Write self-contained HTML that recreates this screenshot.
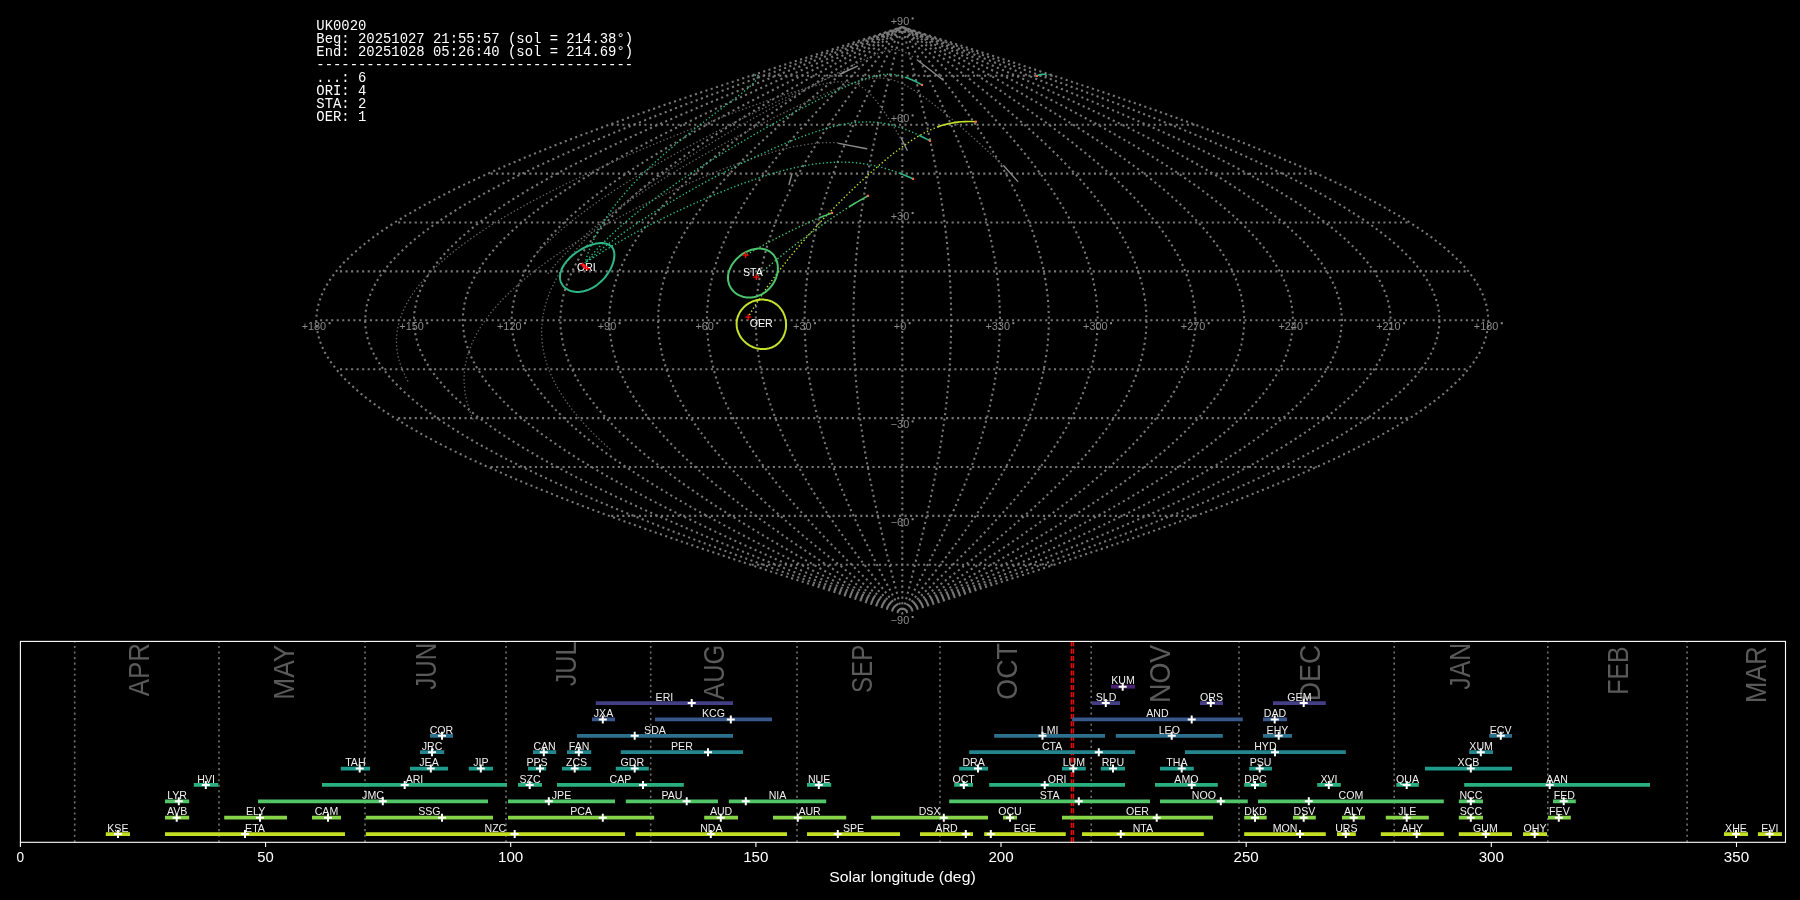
<!DOCTYPE html>
<html><head><meta charset="utf-8"><style>
html,body{margin:0;padding:0;background:#000;width:1800px;height:900px;overflow:hidden}
svg{display:block;will-change:transform}
.gl{font-family:"Liberation Sans",sans-serif;font-size:10.9px;fill:#8a8a8a}
.deg{font-size:6px}
.leg{font-family:"Liberation Mono",monospace;font-size:13.9px;fill:#ffffff;white-space:pre}
.mon{font-family:"Liberation Sans",sans-serif;font-size:29.5px;fill:#5a5a5a}
.bl{font-family:"Liberation Sans",sans-serif;font-size:10.6px;fill:#f0f0f0;text-anchor:middle}
.ml{font-family:"Liberation Sans",sans-serif;font-size:10.6px;fill:#ffffff;text-anchor:middle}
.tl{font-family:"Liberation Sans",sans-serif;font-size:13.9px;fill:#ffffff;text-anchor:middle}
</style></head><body>
<svg width="1800" height="900" viewBox="0 0 1800 900">
<rect width="1800" height="900" fill="#000"/>
<path d="M751.6 564.8H1054.0M611.2 515.9H1195.3M490.6 467.0H1316.7M398.1 418.1H1409.9M340.0 369.2H1468.4M320.1 320.3H1488.4M340.0 271.4H1468.4M398.1 222.5H1409.9M490.6 173.6H1316.7M611.2 124.7H1195.3M751.6 75.8H1054.0" fill="none" stroke="#777777" stroke-width="2.09" stroke-dasharray="2.09 3.445"/>
<path d="M902.3 613.7L927.9 605.5L953.4 597.4L978.8 589.2L1004.1 581.1L1029.2 573.0L1054.0 564.8L1078.5 556.6L1102.8 548.5L1126.6 540.4L1150.0 532.2L1172.9 524.0L1195.3 515.9L1217.2 507.8L1238.5 499.6L1259.1 491.4L1279.0 483.3L1298.2 475.1L1316.7 467.0L1334.4 458.9L1351.3 450.7L1367.3 442.6L1382.4 434.4L1396.6 426.2L1409.9 418.1L1422.2 409.9L1433.5 401.8L1443.8 393.6L1453.0 385.5L1461.3 377.4L1468.4 369.2L1474.5 361.1L1479.5 352.9L1483.4 344.8L1486.1 336.6L1487.8 328.4L1488.4 320.3L1487.8 312.2L1486.1 304.0L1483.4 295.9L1479.5 287.7L1474.5 279.6L1468.4 271.4L1461.3 263.2L1453.0 255.1L1443.8 247.0L1433.5 238.8L1422.2 230.7L1409.9 222.5L1396.6 214.4L1382.4 206.2L1367.3 198.1L1351.3 189.9L1334.4 181.8L1316.7 173.6L1298.2 165.5L1279.0 157.3L1259.1 149.2L1238.5 141.0L1217.2 132.9L1195.3 124.7L1172.9 116.6L1150.0 108.4L1126.6 100.3L1102.8 92.1L1078.5 84.0L1054.0 75.8L1029.2 67.7L1004.1 59.5L978.8 51.4L953.4 43.2L927.9 35.1L902.3 26.9M902.3 613.7L925.7 605.5L949.1 597.4L972.4 589.2L995.6 581.1L1018.6 573.0L1041.3 564.8L1063.9 556.6L1086.0 548.5L1107.9 540.4L1129.3 532.2L1150.4 524.0L1170.9 515.9L1191.0 507.8L1210.4 499.6L1229.4 491.4L1247.6 483.3L1265.3 475.1L1282.2 467.0L1298.4 458.9L1313.8 450.7L1328.5 442.6L1342.4 434.4L1355.4 426.2L1367.6 418.1L1378.8 409.9L1389.2 401.8L1398.6 393.6L1407.1 385.5L1414.7 377.4L1421.2 369.2L1426.8 361.1L1431.4 352.9L1434.9 344.8L1437.5 336.6L1439.0 328.4L1439.5 320.3L1439.0 312.2L1437.5 304.0L1434.9 295.9L1431.4 287.7L1426.8 279.6L1421.2 271.4L1414.7 263.2L1407.1 255.1L1398.6 247.0L1389.2 238.8L1378.8 230.7L1367.6 222.5L1355.4 214.4L1342.4 206.2L1328.5 198.1L1313.8 189.9L1298.4 181.8L1282.2 173.6L1265.3 165.5L1247.6 157.3L1229.4 149.2L1210.4 141.0L1191.0 132.9L1170.9 124.7L1150.4 116.6L1129.3 108.4L1107.9 100.3L1086.0 92.1L1063.9 84.0L1041.3 75.8L1018.6 67.7L995.6 59.5L972.4 51.4L949.1 43.2L925.7 35.1L902.3 26.9M902.3 613.7L923.6 605.5L944.9 597.4L966.0 589.2L987.1 581.1L1008.0 573.0L1028.7 564.8L1049.2 556.6L1069.3 548.5L1089.2 540.4L1108.7 532.2L1127.8 524.0L1146.5 515.9L1164.7 507.8L1182.4 499.6L1199.6 491.4L1216.2 483.3L1232.3 475.1L1247.7 467.0L1262.4 458.9L1276.4 450.7L1289.8 442.6L1302.4 434.4L1314.2 426.2L1325.3 418.1L1335.5 409.9L1344.9 401.8L1353.5 393.6L1361.2 385.5L1368.1 377.4L1374.1 369.2L1379.1 361.1L1383.3 352.9L1386.5 344.8L1388.8 336.6L1390.2 328.4L1390.7 320.3L1390.2 312.2L1388.8 304.0L1386.5 295.9L1383.3 287.7L1379.1 279.6L1374.1 271.4L1368.1 263.2L1361.2 255.1L1353.5 247.0L1344.9 238.8L1335.5 230.7L1325.3 222.5L1314.2 214.4L1302.4 206.2L1289.8 198.1L1276.4 189.9L1262.4 181.8L1247.7 173.6L1232.3 165.5L1216.2 157.3L1199.6 149.2L1182.4 141.0L1164.7 132.9L1146.5 124.7L1127.8 116.6L1108.7 108.4L1089.2 100.3L1069.3 92.1L1049.2 84.0L1028.7 75.8L1008.0 67.7L987.1 59.5L966.0 51.4L944.9 43.2L923.6 35.1L902.3 26.9M902.3 613.7L921.5 605.5L940.6 597.4L959.7 589.2L978.6 581.1L997.4 573.0L1016.1 564.8L1034.5 556.6L1052.6 548.5L1070.5 540.4L1088.1 532.2L1105.3 524.0L1122.1 515.9L1138.5 507.8L1154.4 499.6L1169.9 491.4L1184.8 483.3L1199.3 475.1L1213.1 467.0L1226.4 458.9L1239.0 450.7L1251.0 442.6L1262.4 434.4L1273.0 426.2L1283.0 418.1L1292.2 409.9L1300.7 401.8L1308.4 393.6L1315.4 385.5L1321.5 377.4L1326.9 369.2L1331.4 361.1L1335.2 352.9L1338.1 344.8L1340.2 336.6L1341.4 328.4L1341.9 320.3L1341.4 312.2L1340.2 304.0L1338.1 295.9L1335.2 287.7L1331.4 279.6L1326.9 271.4L1321.5 263.2L1315.4 255.1L1308.4 247.0L1300.7 238.8L1292.2 230.7L1283.0 222.5L1273.0 214.4L1262.4 206.2L1251.0 198.1L1239.0 189.9L1226.4 181.8L1213.1 173.6L1199.3 165.5L1184.8 157.3L1169.9 149.2L1154.4 141.0L1138.5 132.9L1122.1 124.7L1105.3 116.6L1088.1 108.4L1070.5 100.3L1052.6 92.1L1034.5 84.0L1016.1 75.8L997.4 67.7L978.6 59.5L959.7 51.4L940.6 43.2L921.5 35.1L902.3 26.9M902.3 613.7L919.3 605.5L936.4 597.4L953.3 589.2L970.1 581.1L986.9 573.0L1003.4 564.8L1019.8 556.6L1035.9 548.5L1051.8 540.4L1067.4 532.2L1082.7 524.0L1097.7 515.9L1112.2 507.8L1126.4 499.6L1140.2 491.4L1153.4 483.3L1166.3 475.1L1178.6 467.0L1190.4 458.9L1201.6 450.7L1212.3 442.6L1222.4 434.4L1231.8 426.2L1240.7 418.1L1248.9 409.9L1256.4 401.8L1263.3 393.6L1269.5 385.5L1274.9 377.4L1279.7 369.2L1283.8 361.1L1287.1 352.9L1289.7 344.8L1291.5 336.6L1292.6 328.4L1293.0 320.3L1292.6 312.2L1291.5 304.0L1289.7 295.9L1287.1 287.7L1283.8 279.6L1279.7 271.4L1274.9 263.2L1269.5 255.1L1263.3 247.0L1256.4 238.8L1248.9 230.7L1240.7 222.5L1231.8 214.4L1222.4 206.2L1212.3 198.1L1201.6 189.9L1190.4 181.8L1178.6 173.6L1166.3 165.5L1153.4 157.3L1140.2 149.2L1126.4 141.0L1112.2 132.9L1097.7 124.7L1082.7 116.6L1067.4 108.4L1051.8 100.3L1035.9 92.1L1019.8 84.0L1003.4 75.8L986.9 67.7L970.1 59.5L953.3 51.4L936.4 43.2L919.3 35.1L902.3 26.9M902.3 613.7L917.2 605.5L932.1 597.4L946.9 589.2L961.7 581.1L976.3 573.0L990.8 564.8L1005.1 556.6L1019.2 548.5L1033.1 540.4L1046.8 532.2L1060.2 524.0L1073.2 515.9L1086.0 507.8L1098.4 499.6L1110.4 491.4L1122.1 483.3L1133.3 475.1L1144.0 467.0L1154.4 458.9L1164.2 450.7L1173.5 442.6L1182.4 434.4L1190.6 426.2L1198.4 418.1L1205.6 409.9L1212.1 401.8L1218.2 393.6L1223.6 385.5L1228.4 377.4L1232.5 369.2L1236.1 361.1L1239.0 352.9L1241.3 344.8L1242.9 336.6L1243.9 328.4L1244.2 320.3L1243.9 312.2L1242.9 304.0L1241.3 295.9L1239.0 287.7L1236.1 279.6L1232.5 271.4L1228.4 263.2L1223.6 255.1L1218.2 247.0L1212.1 238.8L1205.6 230.7L1198.4 222.5L1190.6 214.4L1182.4 206.2L1173.5 198.1L1164.2 189.9L1154.4 181.8L1144.0 173.6L1133.3 165.5L1122.1 157.3L1110.4 149.2L1098.4 141.0L1086.0 132.9L1073.2 124.7L1060.2 116.6L1046.8 108.4L1033.1 100.3L1019.2 92.1L1005.1 84.0L990.8 75.8L976.3 67.7L961.7 59.5L946.9 51.4L932.1 43.2L917.2 35.1L902.3 26.9M902.3 613.7L915.1 605.5L927.8 597.4L940.5 589.2L953.2 581.1L965.7 573.0L978.1 564.8L990.4 556.6L1002.5 548.5L1014.4 540.4L1026.1 532.2L1037.6 524.0L1048.8 515.9L1059.8 507.8L1070.4 499.6L1080.7 491.4L1090.7 483.3L1100.3 475.1L1109.5 467.0L1118.4 458.9L1126.8 450.7L1134.8 442.6L1142.3 434.4L1149.4 426.2L1156.1 418.1L1162.2 409.9L1167.9 401.8L1173.0 393.6L1177.7 385.5L1181.8 377.4L1185.4 369.2L1188.4 361.1L1190.9 352.9L1192.8 344.8L1194.2 336.6L1195.1 328.4L1195.3 320.3L1195.1 312.2L1194.2 304.0L1192.8 295.9L1190.9 287.7L1188.4 279.6L1185.4 271.4L1181.8 263.2L1177.7 255.1L1173.0 247.0L1167.9 238.8L1162.2 230.7L1156.1 222.5L1149.4 214.4L1142.3 206.2L1134.8 198.1L1126.8 189.9L1118.4 181.8L1109.5 173.6L1100.3 165.5L1090.7 157.3L1080.7 149.2L1070.4 141.0L1059.8 132.9L1048.8 124.7L1037.6 116.6L1026.1 108.4L1014.4 100.3L1002.5 92.1L990.4 84.0L978.1 75.8L965.7 67.7L953.2 59.5L940.5 51.4L927.8 43.2L915.1 35.1L902.3 26.9M902.3 613.7L913.0 605.5L923.6 597.4L934.2 589.2L944.7 581.1L955.2 573.0L965.5 564.8L975.7 556.6L985.8 548.5L995.8 540.4L1005.5 532.2L1015.1 524.0L1024.4 515.9L1033.5 507.8L1042.4 499.6L1051.0 491.4L1059.3 483.3L1067.3 475.1L1075.0 467.0L1082.3 458.9L1089.4 450.7L1096.0 442.6L1102.3 434.4L1108.3 426.2L1113.8 418.1L1118.9 409.9L1123.6 401.8L1127.9 393.6L1131.8 385.5L1135.2 377.4L1138.2 369.2L1140.7 361.1L1142.8 352.9L1144.4 344.8L1145.6 336.6L1146.3 328.4L1146.5 320.3L1146.3 312.2L1145.6 304.0L1144.4 295.9L1142.8 287.7L1140.7 279.6L1138.2 271.4L1135.2 263.2L1131.8 255.1L1127.9 247.0L1123.6 238.8L1118.9 230.7L1113.8 222.5L1108.3 214.4L1102.3 206.2L1096.0 198.1L1089.4 189.9L1082.3 181.8L1075.0 173.6L1067.3 165.5L1059.3 157.3L1051.0 149.2L1042.4 141.0L1033.5 132.9L1024.4 124.7L1015.1 116.6L1005.5 108.4L995.8 100.3L985.8 92.1L975.7 84.0L965.5 75.8L955.2 67.7L944.7 59.5L934.2 51.4L923.6 43.2L913.0 35.1L902.3 26.9M902.3 613.7L910.8 605.5L919.3 597.4L927.8 589.2L936.2 581.1L944.6 573.0L952.9 564.8L961.0 556.6L969.1 548.5L977.1 540.4L984.9 532.2L992.5 524.0L1000.0 515.9L1007.3 507.8L1014.4 499.6L1021.2 491.4L1027.9 483.3L1034.3 475.1L1040.4 467.0L1046.3 458.9L1052.0 450.7L1057.3 442.6L1062.3 434.4L1067.1 426.2L1071.5 418.1L1075.6 409.9L1079.4 401.8L1082.8 393.6L1085.9 385.5L1088.6 377.4L1091.0 369.2L1093.0 361.1L1094.7 352.9L1096.0 344.8L1096.9 336.6L1097.5 328.4L1097.7 320.3L1097.5 312.2L1096.9 304.0L1096.0 295.9L1094.7 287.7L1093.0 279.6L1091.0 271.4L1088.6 263.2L1085.9 255.1L1082.8 247.0L1079.4 238.8L1075.6 230.7L1071.5 222.5L1067.1 214.4L1062.3 206.2L1057.3 198.1L1052.0 189.9L1046.3 181.8L1040.4 173.6L1034.3 165.5L1027.9 157.3L1021.2 149.2L1014.4 141.0L1007.3 132.9L1000.0 124.7L992.5 116.6L984.9 108.4L977.1 100.3L969.1 92.1L961.0 84.0L952.9 75.8L944.6 67.7L936.2 59.5L927.8 51.4L919.3 43.2L910.8 35.1L902.3 26.9M902.3 613.7L908.7 605.5L915.1 597.4L921.4 589.2L927.7 581.1L934.0 573.0L940.2 564.8L946.4 556.6L952.4 548.5L958.4 540.4L964.2 532.2L970.0 524.0L975.6 515.9L981.0 507.8L986.3 499.6L991.5 491.4L996.5 483.3L1001.3 475.1L1005.9 467.0L1010.3 458.9L1014.5 450.7L1018.5 442.6L1022.3 434.4L1025.9 426.2L1029.2 418.1L1032.3 409.9L1035.1 401.8L1037.7 393.6L1040.0 385.5L1042.0 377.4L1043.8 369.2L1045.3 361.1L1046.6 352.9L1047.6 344.8L1048.3 336.6L1048.7 328.4L1048.8 320.3L1048.7 312.2L1048.3 304.0L1047.6 295.9L1046.6 287.7L1045.3 279.6L1043.8 271.4L1042.0 263.2L1040.0 255.1L1037.7 247.0L1035.1 238.8L1032.3 230.7L1029.2 222.5L1025.9 214.4L1022.3 206.2L1018.5 198.1L1014.5 189.9L1010.3 181.8L1005.9 173.6L1001.3 165.5L996.5 157.3L991.5 149.2L986.3 141.0L981.0 132.9L975.6 124.7L970.0 116.6L964.2 108.4L958.4 100.3L952.4 92.1L946.4 84.0L940.2 75.8L934.0 67.7L927.7 59.5L921.4 51.4L915.1 43.2L908.7 35.1L902.3 26.9M902.3 613.7L906.6 605.5L910.8 597.4L915.0 589.2L919.3 581.1L923.4 573.0L927.6 564.8L931.7 556.6L935.7 548.5L939.7 540.4L943.6 532.2L947.4 524.0L951.1 515.9L954.8 507.8L958.3 499.6L961.8 491.4L965.1 483.3L968.3 475.1L971.4 467.0L974.3 458.9L977.1 450.7L979.8 442.6L982.3 434.4L984.7 426.2L986.9 418.1L988.9 409.9L990.8 401.8L992.5 393.6L994.1 385.5L995.5 377.4L996.7 369.2L997.7 361.1L998.5 352.9L999.1 344.8L999.6 336.6L999.9 328.4L1000.0 320.3L999.9 312.2L999.6 304.0L999.1 295.9L998.5 287.7L997.7 279.6L996.7 271.4L995.5 263.2L994.1 255.1L992.5 247.0L990.8 238.8L988.9 230.7L986.9 222.5L984.7 214.4L982.3 206.2L979.8 198.1L977.1 189.9L974.3 181.8L971.4 173.6L968.3 165.5L965.1 157.3L961.8 149.2L958.3 141.0L954.8 132.9L951.1 124.7L947.4 116.6L943.6 108.4L939.7 100.3L935.7 92.1L931.7 84.0L927.6 75.8L923.4 67.7L919.3 59.5L915.0 51.4L910.8 43.2L906.6 35.1L902.3 26.9M902.3 613.7L904.4 605.5L906.6 597.4L908.7 589.2L910.8 581.1L912.9 573.0L914.9 564.8L917.0 556.6L919.0 548.5L921.0 540.4L922.9 532.2L924.9 524.0L926.7 515.9L928.5 507.8L930.3 499.6L932.0 491.4L933.7 483.3L935.3 475.1L936.8 467.0L938.3 458.9L939.7 450.7L941.0 442.6L942.3 434.4L943.5 426.2L944.6 418.1L945.6 409.9L946.6 401.8L947.4 393.6L948.2 385.5L948.9 377.4L949.5 369.2L950.0 361.1L950.4 352.9L950.7 344.8L951.0 336.6L951.1 328.4L951.1 320.3L951.1 312.2L951.0 304.0L950.7 295.9L950.4 287.7L950.0 279.6L949.5 271.4L948.9 263.2L948.2 255.1L947.4 247.0L946.6 238.8L945.6 230.7L944.6 222.5L943.5 214.4L942.3 206.2L941.0 198.1L939.7 189.9L938.3 181.8L936.8 173.6L935.3 165.5L933.7 157.3L932.0 149.2L930.3 141.0L928.5 132.9L926.7 124.7L924.9 116.6L922.9 108.4L921.0 100.3L919.0 92.1L917.0 84.0L914.9 75.8L912.9 67.7L910.8 59.5L908.7 51.4L906.6 43.2L904.4 35.1L902.3 26.9M902.3 613.7L902.3 605.5L902.3 597.4L902.3 589.2L902.3 581.1L902.3 573.0L902.3 564.8L902.3 556.6L902.3 548.5L902.3 540.4L902.3 532.2L902.3 524.0L902.3 515.9L902.3 507.8L902.3 499.6L902.3 491.4L902.3 483.3L902.3 475.1L902.3 467.0L902.3 458.9L902.3 450.7L902.3 442.6L902.3 434.4L902.3 426.2L902.3 418.1L902.3 409.9L902.3 401.8L902.3 393.6L902.3 385.5L902.3 377.4L902.3 369.2L902.3 361.1L902.3 352.9L902.3 344.8L902.3 336.6L902.3 328.4L902.3 320.3L902.3 312.2L902.3 304.0L902.3 295.9L902.3 287.7L902.3 279.6L902.3 271.4L902.3 263.2L902.3 255.1L902.3 247.0L902.3 238.8L902.3 230.7L902.3 222.5L902.3 214.4L902.3 206.2L902.3 198.1L902.3 189.9L902.3 181.8L902.3 173.6L902.3 165.5L902.3 157.3L902.3 149.2L902.3 141.0L902.3 132.9L902.3 124.7L902.3 116.6L902.3 108.4L902.3 100.3L902.3 92.1L902.3 84.0L902.3 75.8L902.3 67.7L902.3 59.5L902.3 51.4L902.3 43.2L902.3 35.1L902.3 26.9M902.3 613.7L900.2 605.5L898.0 597.4L895.9 589.2L893.8 581.1L891.7 573.0L889.7 564.8L887.6 556.6L885.6 548.5L883.6 540.4L881.7 532.2L879.7 524.0L877.9 515.9L876.1 507.8L874.3 499.6L872.6 491.4L870.9 483.3L869.3 475.1L867.8 467.0L866.3 458.9L864.9 450.7L863.6 442.6L862.3 434.4L861.1 426.2L860.0 418.1L859.0 409.9L858.0 401.8L857.2 393.6L856.4 385.5L855.7 377.4L855.1 369.2L854.6 361.1L854.2 352.9L853.9 344.8L853.6 336.6L853.5 328.4L853.5 320.3L853.5 312.2L853.6 304.0L853.9 295.9L854.2 287.7L854.6 279.6L855.1 271.4L855.7 263.2L856.4 255.1L857.2 247.0L858.0 238.8L859.0 230.7L860.0 222.5L861.1 214.4L862.3 206.2L863.6 198.1L864.9 189.9L866.3 181.8L867.8 173.6L869.3 165.5L870.9 157.3L872.6 149.2L874.3 141.0L876.1 132.9L877.9 124.7L879.7 116.6L881.7 108.4L883.6 100.3L885.6 92.1L887.6 84.0L889.7 75.8L891.7 67.7L893.8 59.5L895.9 51.4L898.0 43.2L900.2 35.1L902.3 26.9M902.3 613.7L898.0 605.5L893.8 597.4L889.6 589.2L885.3 581.1L881.2 573.0L877.0 564.8L872.9 556.6L868.9 548.5L864.9 540.4L861.0 532.2L857.2 524.0L853.5 515.9L849.8 507.8L846.3 499.6L842.8 491.4L839.5 483.3L836.3 475.1L833.2 467.0L830.3 458.9L827.5 450.7L824.8 442.6L822.3 434.4L819.9 426.2L817.7 418.1L815.7 409.9L813.8 401.8L812.1 393.6L810.5 385.5L809.1 377.4L807.9 369.2L806.9 361.1L806.1 352.9L805.5 344.8L805.0 336.6L804.7 328.4L804.6 320.3L804.7 312.2L805.0 304.0L805.5 295.9L806.1 287.7L806.9 279.6L807.9 271.4L809.1 263.2L810.5 255.1L812.1 247.0L813.8 238.8L815.7 230.7L817.7 222.5L819.9 214.4L822.3 206.2L824.8 198.1L827.5 189.9L830.3 181.8L833.2 173.6L836.3 165.5L839.5 157.3L842.8 149.2L846.3 141.0L849.8 132.9L853.5 124.7L857.2 116.6L861.0 108.4L864.9 100.3L868.9 92.1L872.9 84.0L877.0 75.8L881.2 67.7L885.3 59.5L889.6 51.4L893.8 43.2L898.0 35.1L902.3 26.9M902.3 613.7L895.9 605.5L889.5 597.4L883.2 589.2L876.9 581.1L870.6 573.0L864.4 564.8L858.2 556.6L852.2 548.5L846.2 540.4L840.4 532.2L834.6 524.0L829.0 515.9L823.6 507.8L818.3 499.6L813.1 491.4L808.1 483.3L803.3 475.1L798.7 467.0L794.3 458.9L790.1 450.7L786.1 442.6L782.3 434.4L778.7 426.2L775.4 418.1L772.3 409.9L769.5 401.8L766.9 393.6L764.6 385.5L762.6 377.4L760.8 369.2L759.3 361.1L758.0 352.9L757.0 344.8L756.3 336.6L755.9 328.4L755.8 320.3L755.9 312.2L756.3 304.0L757.0 295.9L758.0 287.7L759.3 279.6L760.8 271.4L762.6 263.2L764.6 255.1L766.9 247.0L769.5 238.8L772.3 230.7L775.4 222.5L778.7 214.4L782.3 206.2L786.1 198.1L790.1 189.9L794.3 181.8L798.7 173.6L803.3 165.5L808.1 157.3L813.1 149.2L818.3 141.0L823.6 132.9L829.0 124.7L834.6 116.6L840.4 108.4L846.2 100.3L852.2 92.1L858.2 84.0L864.4 75.8L870.6 67.7L876.9 59.5L883.2 51.4L889.5 43.2L895.9 35.1L902.3 26.9M902.3 613.7L893.8 605.5L885.3 597.4L876.8 589.2L868.4 581.1L860.0 573.0L851.7 564.8L843.6 556.6L835.5 548.5L827.5 540.4L819.7 532.2L812.1 524.0L804.6 515.9L797.3 507.8L790.2 499.6L783.4 491.4L776.7 483.3L770.3 475.1L764.2 467.0L758.3 458.9L752.6 450.7L747.3 442.6L742.3 434.4L737.5 426.2L733.1 418.1L729.0 409.9L725.2 401.8L721.8 393.6L718.7 385.5L716.0 377.4L713.6 369.2L711.6 361.1L709.9 352.9L708.6 344.8L707.7 336.6L707.1 328.4L706.9 320.3L707.1 312.2L707.7 304.0L708.6 295.9L709.9 287.7L711.6 279.6L713.6 271.4L716.0 263.2L718.7 255.1L721.8 247.0L725.2 238.8L729.0 230.7L733.1 222.5L737.5 214.4L742.3 206.2L747.3 198.1L752.6 189.9L758.3 181.8L764.2 173.6L770.3 165.5L776.7 157.3L783.4 149.2L790.2 141.0L797.3 132.9L804.6 124.7L812.1 116.6L819.7 108.4L827.5 100.3L835.5 92.1L843.6 84.0L851.7 75.8L860.0 67.7L868.4 59.5L876.8 51.4L885.3 43.2L893.8 35.1L902.3 26.9M902.3 613.7L891.6 605.5L881.0 597.4L870.4 589.2L859.9 581.1L849.4 573.0L839.1 564.8L828.9 556.6L818.8 548.5L808.8 540.4L799.1 532.2L789.5 524.0L780.2 515.9L771.1 507.8L762.2 499.6L753.6 491.4L745.3 483.3L737.3 475.1L729.6 467.0L722.3 458.9L715.2 450.7L708.6 442.6L702.3 434.4L696.3 426.2L690.8 418.1L685.7 409.9L681.0 401.8L676.7 393.6L672.8 385.5L669.4 377.4L666.4 369.2L663.9 361.1L661.8 352.9L660.2 344.8L659.0 336.6L658.3 328.4L658.1 320.3L658.3 312.2L659.0 304.0L660.2 295.9L661.8 287.7L663.9 279.6L666.4 271.4L669.4 263.2L672.8 255.1L676.7 247.0L681.0 238.8L685.7 230.7L690.8 222.5L696.3 214.4L702.3 206.2L708.6 198.1L715.2 189.9L722.3 181.8L729.6 173.6L737.3 165.5L745.3 157.3L753.6 149.2L762.2 141.0L771.1 132.9L780.2 124.7L789.5 116.6L799.1 108.4L808.8 100.3L818.8 92.1L828.9 84.0L839.1 75.8L849.4 67.7L859.9 59.5L870.4 51.4L881.0 43.2L891.6 35.1L902.3 26.9M902.3 613.7L889.5 605.5L876.8 597.4L864.1 589.2L851.4 581.1L838.9 573.0L826.5 564.8L814.2 556.6L802.1 548.5L790.2 540.4L778.5 532.2L767.0 524.0L755.8 515.9L744.8 507.8L734.2 499.6L723.9 491.4L713.9 483.3L704.3 475.1L695.1 467.0L686.2 458.9L677.8 450.7L669.8 442.6L662.3 434.4L655.2 426.2L648.5 418.1L642.4 409.9L636.7 401.8L631.6 393.6L626.9 385.5L622.8 377.4L619.2 369.2L616.2 361.1L613.7 352.9L611.8 344.8L610.4 336.6L609.5 328.4L609.3 320.3L609.5 312.2L610.4 304.0L611.8 295.9L613.7 287.7L616.2 279.6L619.2 271.4L622.8 263.2L626.9 255.1L631.6 247.0L636.7 238.8L642.4 230.7L648.5 222.5L655.2 214.4L662.3 206.2L669.8 198.1L677.8 189.9L686.2 181.8L695.1 173.6L704.3 165.5L713.9 157.3L723.9 149.2L734.2 141.0L744.8 132.9L755.8 124.7L767.0 116.6L778.5 108.4L790.2 100.3L802.1 92.1L814.2 84.0L826.5 75.8L838.9 67.7L851.4 59.5L864.1 51.4L876.8 43.2L889.5 35.1L902.3 26.9M902.3 613.7L887.4 605.5L872.5 597.4L857.7 589.2L842.9 581.1L828.3 573.0L813.8 564.8L799.5 556.6L785.4 548.5L771.5 540.4L757.8 532.2L744.4 524.0L731.4 515.9L718.6 507.8L706.2 499.6L694.2 491.4L682.5 483.3L671.3 475.1L660.6 467.0L650.2 458.9L640.4 450.7L631.1 442.6L622.2 434.4L614.0 426.2L606.2 418.1L599.0 409.9L592.5 401.8L586.4 393.6L581.0 385.5L576.2 377.4L572.1 369.2L568.5 361.1L565.6 352.9L563.3 344.8L561.7 336.6L560.7 328.4L560.4 320.3L560.7 312.2L561.7 304.0L563.3 295.9L565.6 287.7L568.5 279.6L572.1 271.4L576.2 263.2L581.0 255.1L586.4 247.0L592.5 238.8L599.0 230.7L606.2 222.5L614.0 214.4L622.2 206.2L631.1 198.1L640.4 189.9L650.2 181.8L660.6 173.6L671.3 165.5L682.5 157.3L694.2 149.2L706.2 141.0L718.6 132.9L731.4 124.7L744.4 116.6L757.8 108.4L771.5 100.3L785.4 92.1L799.5 84.0L813.8 75.8L828.3 67.7L842.9 59.5L857.7 51.4L872.5 43.2L887.4 35.1L902.3 26.9M902.3 613.7L885.3 605.5L868.2 597.4L851.3 589.2L834.5 581.1L817.7 573.0L801.2 564.8L784.8 556.6L768.7 548.5L752.8 540.4L737.2 532.2L721.9 524.0L706.9 515.9L692.4 507.8L678.2 499.6L664.4 491.4L651.2 483.3L638.3 475.1L626.0 467.0L614.2 458.9L603.0 450.7L592.3 442.6L582.2 434.4L572.8 426.2L563.9 418.1L555.7 409.9L548.2 401.8L541.3 393.6L535.1 385.5L529.7 377.4L524.9 369.2L520.8 361.1L517.5 352.9L514.9 344.8L513.1 336.6L512.0 328.4L511.6 320.3L512.0 312.2L513.1 304.0L514.9 295.9L517.5 287.7L520.8 279.6L524.9 271.4L529.7 263.2L535.1 255.1L541.3 247.0L548.2 238.8L555.7 230.7L563.9 222.5L572.8 214.4L582.2 206.2L592.3 198.1L603.0 189.9L614.2 181.8L626.0 173.6L638.3 165.5L651.2 157.3L664.4 149.2L678.2 141.0L692.4 132.9L706.9 124.7L721.9 116.6L737.2 108.4L752.8 100.3L768.7 92.1L784.8 84.0L801.2 75.8L817.7 67.7L834.5 59.5L851.3 51.4L868.2 43.2L885.3 35.1L902.3 26.9M902.3 613.7L883.1 605.5L864.0 597.4L844.9 589.2L826.0 581.1L807.2 573.0L788.5 564.8L770.1 556.6L752.0 548.5L734.1 540.4L716.5 532.2L699.3 524.0L682.5 515.9L666.1 507.8L650.2 499.6L634.7 491.4L619.8 483.3L605.3 475.1L591.5 467.0L578.2 458.9L565.6 450.7L553.6 442.6L542.2 434.4L531.6 426.2L521.6 418.1L512.4 409.9L503.9 401.8L496.2 393.6L489.2 385.5L483.1 377.4L477.7 369.2L473.2 361.1L469.4 352.9L466.5 344.8L464.4 336.6L463.2 328.4L462.7 320.3L463.2 312.2L464.4 304.0L466.5 295.9L469.4 287.7L473.2 279.6L477.7 271.4L483.1 263.2L489.2 255.1L496.2 247.0L503.9 238.8L512.4 230.7L521.6 222.5L531.6 214.4L542.2 206.2L553.6 198.1L565.6 189.9L578.2 181.8L591.5 173.6L605.3 165.5L619.8 157.3L634.7 149.2L650.2 141.0L666.1 132.9L682.5 124.7L699.3 116.6L716.5 108.4L734.1 100.3L752.0 92.1L770.1 84.0L788.5 75.8L807.2 67.7L826.0 59.5L844.9 51.4L864.0 43.2L883.1 35.1L902.3 26.9M902.3 613.7L881.0 605.5L859.7 597.4L838.6 589.2L817.5 581.1L796.6 573.0L775.9 564.8L755.4 556.6L735.3 548.5L715.4 540.4L695.9 532.2L676.8 524.0L658.1 515.9L639.9 507.8L622.2 499.6L605.0 491.4L588.4 483.3L572.3 475.1L556.9 467.0L542.2 458.9L528.2 450.7L514.8 442.6L502.2 434.4L490.4 426.2L479.3 418.1L469.1 409.9L459.7 401.8L451.1 393.6L443.4 385.5L436.5 377.4L430.5 369.2L425.5 361.1L421.3 352.9L418.1 344.8L415.8 336.6L414.4 328.4L413.9 320.3L414.4 312.2L415.8 304.0L418.1 295.9L421.3 287.7L425.5 279.6L430.5 271.4L436.5 263.2L443.4 255.1L451.1 247.0L459.7 238.8L469.1 230.7L479.3 222.5L490.4 214.4L502.2 206.2L514.8 198.1L528.2 189.9L542.2 181.8L556.9 173.6L572.3 165.5L588.4 157.3L605.0 149.2L622.2 141.0L639.9 132.9L658.1 124.7L676.8 116.6L695.9 108.4L715.4 100.3L735.3 92.1L755.4 84.0L775.9 75.8L796.6 67.7L817.5 59.5L838.6 51.4L859.7 43.2L881.0 35.1L902.3 26.9M902.3 613.7L878.9 605.5L855.5 597.4L832.2 589.2L809.0 581.1L786.0 573.0L763.3 564.8L740.7 556.6L718.6 548.5L696.7 540.4L675.3 532.2L654.2 524.0L633.7 515.9L613.6 507.8L594.2 499.6L575.2 491.4L557.0 483.3L539.3 475.1L522.4 467.0L506.2 458.9L490.8 450.7L476.1 442.6L462.2 434.4L449.2 426.2L437.0 418.1L425.8 409.9L415.4 401.8L406.0 393.6L397.5 385.5L389.9 377.4L383.4 369.2L377.8 361.1L373.2 352.9L369.7 344.8L367.1 336.6L365.6 328.4L365.1 320.3L365.6 312.2L367.1 304.0L369.7 295.9L373.2 287.7L377.8 279.6L383.4 271.4L389.9 263.2L397.5 255.1L406.0 247.0L415.4 238.8L425.8 230.7L437.0 222.5L449.2 214.4L462.2 206.2L476.1 198.1L490.8 189.9L506.2 181.8L522.4 173.6L539.3 165.5L557.0 157.3L575.2 149.2L594.2 141.0L613.6 132.9L633.7 124.7L654.2 116.6L675.3 108.4L696.7 100.3L718.6 92.1L740.7 84.0L763.3 75.8L786.0 67.7L809.0 59.5L832.2 51.4L855.5 43.2L878.9 35.1L902.3 26.9M902.3 613.7L876.7 605.5L851.2 597.4L825.8 589.2L800.5 581.1L775.4 573.0L750.6 564.8L726.1 556.6L701.8 548.5L678.0 540.4L654.6 532.2L631.7 524.0L609.3 515.9L587.4 507.8L566.1 499.6L545.5 491.4L525.6 483.3L506.4 475.1L487.9 467.0L470.2 458.9L453.3 450.7L437.3 442.6L422.2 434.4L408.0 426.2L394.7 418.1L382.4 409.9L371.1 401.8L360.8 393.6L351.6 385.5L343.3 377.4L336.2 369.2L330.1 361.1L325.1 352.9L321.2 344.8L318.5 336.6L316.8 328.4L316.2 320.3L316.8 312.2L318.5 304.0L321.2 295.9L325.1 287.7L330.1 279.6L336.2 271.4L343.3 263.2L351.6 255.1L360.8 247.0L371.1 238.8L382.4 230.7L394.7 222.5L408.0 214.4L422.2 206.2L437.3 198.1L453.3 189.9L470.2 181.8L487.9 173.6L506.4 165.5L525.6 157.3L545.5 149.2L566.1 141.0L587.4 132.9L609.3 124.7L631.7 116.6L654.6 108.4L678.0 100.3L701.8 92.1L726.1 84.0L750.6 75.8L775.4 67.7L800.5 59.5L825.8 51.4L851.2 43.2L876.7 35.1L902.3 26.9" fill="none" stroke="#777777" stroke-width="2.09" stroke-dasharray="2.09 3.445" stroke-dashoffset="1.6"/>
<text x="301.65" y="330.1" class="gl">+180</text>
<rect x="328.59" y="322.20" width="2" height="2" fill="#8a8a8a"/>
<text x="399.33" y="330.1" class="gl">+150</text>
<rect x="426.27" y="322.20" width="2" height="2" fill="#8a8a8a"/>
<text x="497.01" y="330.1" class="gl">+120</text>
<rect x="523.95" y="322.20" width="2" height="2" fill="#8a8a8a"/>
<text x="597.72" y="330.1" class="gl">+90</text>
<rect x="618.60" y="322.20" width="2" height="2" fill="#8a8a8a"/>
<text x="695.40" y="330.1" class="gl">+60</text>
<rect x="716.28" y="322.20" width="2" height="2" fill="#8a8a8a"/>
<text x="793.08" y="330.1" class="gl">+30</text>
<rect x="813.96" y="322.20" width="2" height="2" fill="#8a8a8a"/>
<text x="893.79" y="330.1" class="gl">+0</text>
<rect x="908.61" y="322.20" width="2" height="2" fill="#8a8a8a"/>
<text x="985.41" y="330.1" class="gl">+330</text>
<rect x="1012.35" y="322.20" width="2" height="2" fill="#8a8a8a"/>
<text x="1083.09" y="330.1" class="gl">+300</text>
<rect x="1110.03" y="322.20" width="2" height="2" fill="#8a8a8a"/>
<text x="1180.77" y="330.1" class="gl">+270</text>
<rect x="1207.71" y="322.20" width="2" height="2" fill="#8a8a8a"/>
<text x="1278.45" y="330.1" class="gl">+240</text>
<rect x="1305.39" y="322.20" width="2" height="2" fill="#8a8a8a"/>
<text x="1376.13" y="330.1" class="gl">+210</text>
<rect x="1403.07" y="322.20" width="2" height="2" fill="#8a8a8a"/>
<text x="1473.81" y="330.1" class="gl">+180</text>
<rect x="1500.75" y="322.20" width="2" height="2" fill="#8a8a8a"/>
<text x="890.76" y="25.3" class="gl">+90</text>
<rect x="911.64" y="17.40" width="2" height="2" fill="#8a8a8a"/>
<text x="890.76" y="122.3" class="gl">+60</text>
<rect x="911.64" y="114.40" width="2" height="2" fill="#8a8a8a"/>
<text x="890.76" y="219.9" class="gl">+30</text>
<rect x="911.64" y="212.00" width="2" height="2" fill="#8a8a8a"/>
<text x="890.76" y="428.3" class="gl">&#8722;30</text>
<rect x="911.64" y="420.40" width="2" height="2" fill="#8a8a8a"/>
<text x="890.76" y="526.1" class="gl">&#8722;60</text>
<rect x="911.64" y="518.20" width="2" height="2" fill="#8a8a8a"/>
<text x="890.76" y="623.9" class="gl">&#8722;90</text>
<rect x="911.64" y="616.00" width="2" height="2" fill="#8a8a8a"/>
<path d="M838.2 142.8L836.1 142.7L834.0 142.6L831.8 142.6L829.7 142.6L827.5 142.6L825.3 142.6L823.1 142.7L820.9 142.9L818.6 143.0L816.3 143.2L814.0 143.5L811.7 143.8L809.4 144.1L807.0 144.4L804.6 144.8L802.2 145.2L799.8 145.6L797.3 146.1L794.8 146.6L792.3 147.1L789.8 147.7L787.2 148.3L784.6 148.9L782.0 149.6L779.4 150.2L776.8 151.0L774.1 151.7L771.4 152.5L768.7 153.3L765.9 154.1L763.2 154.9L760.4 155.8L757.6 156.7L754.8 157.6L752.0 158.6L749.1 159.6L746.2 160.6L743.4 161.6L740.5 162.6L737.5 163.7L734.6 164.8L731.6 165.9L728.7 167.0L725.7 168.1L722.7 169.3L719.7 170.5L716.7 171.7L713.7 172.9L710.7 174.1L707.6 175.4L704.6 176.7L701.5 177.9L698.5 179.2L695.4 180.6L692.3 181.9L689.2 183.2L686.2 184.6L683.1 186.0L680.0 187.3L676.9 188.7L673.8 190.1L670.8 191.6L667.7 193.0L664.6 194.4L661.5 195.9L658.5 197.3L655.4 198.8L652.3 200.3L649.3 201.8L646.2 203.3L643.2 204.8L640.2 206.3L637.1 207.9L634.1 209.4L631.1 211.0L628.1 212.5L625.1 214.1L622.2 215.7L619.2 217.2L616.3 218.8L613.4 220.4L610.4 222.0L607.5 223.6L604.7 225.2L601.8 226.8L599.0 228.5L596.1 230.1L593.3 231.7L590.5 233.4L587.8 235.0L585.0 236.7L582.3 238.3L579.6 240.0L576.9 241.7L574.2 243.3L571.6 245.0L569.0 246.7L566.4 248.4L563.8 250.1L561.3 251.8L558.7 253.4L556.2 255.1L553.8 256.8L551.3 258.6L548.9 260.3L546.5 262.0L544.2 263.7L541.9 265.4L539.6 267.1L537.3 268.9L535.0 270.6L532.8 272.3L530.7 274.0L528.5 275.8L526.4 277.5L524.3 279.2L522.2 281.0L520.2 282.7L518.2 284.5L516.3 286.2L514.4 288.0L512.5 289.7L510.6 291.5L508.8 293.2L507.0 295.0L505.2 296.7L503.5 298.5L501.8 300.2L500.2 302.0L498.6 303.7L497.0 305.5L495.5 307.3L493.9 309.0L492.5 310.8L491.0 312.5L489.6 314.3L488.3 316.1L487.0 317.8L485.7 319.6L484.4 321.3L483.2 323.1L482.0 324.9L480.9 326.6L479.8 328.4L478.7 330.1L477.7 331.9L476.7 333.7L475.8 335.4L474.9 337.2L474.0 338.9L473.1 340.7L472.3 342.4L471.6 344.2L470.9 345.9L470.2 347.7L469.5 349.4L468.9 351.2L468.3 352.9L467.8 354.7L467.3 356.4L466.8 358.2L466.4 359.9L466.0 361.7L465.7 363.4L465.3 365.1L465.1 366.9L464.8 368.6L464.6 370.3L464.4 372.0L464.3 373.8L464.2 375.5L464.1 377.2L464.1 378.9L464.1 380.6L464.2 382.3L464.2 384.1L464.3 385.8L464.5 387.5L464.6 389.1L464.8 390.8L465.1 392.5L465.3 394.2L465.6 395.9L466.0 397.6L466.3 399.2L466.7 400.9L467.2 402.6L467.6 404.2L468.1 405.9L468.6 407.5L469.1 409.2L469.7 410.8L470.3 412.4L470.9 414.0L471.5 415.7L472.2 417.3L472.9 418.9L473.6 420.5L474.3 422.1M900.4 137.8L899.2 135.8L898.1 133.9L896.9 132.0L895.8 130.1L894.6 128.1L893.5 126.3L892.3 124.4L891.1 122.5L890.0 120.7L888.8 118.9L887.7 117.1L886.5 115.3L885.3 113.5L884.2 111.8L883.0 110.1L881.8 108.4L880.6 106.7L879.4 105.1L878.2 103.5L877.0 102.0L875.8 100.4L874.6 99.0L873.4 97.5L872.1 96.1L870.8 94.8L869.6 93.5L868.2 92.2L866.9 91.0L865.5 89.9L864.1 88.8L862.7 87.8L861.2 86.9L859.7 86.0L858.1 85.2L856.5 84.5L854.8 83.8L853.0 83.3L851.2 82.8L849.2 82.4L847.2 82.2L845.2 82.0L843.0 81.9L840.7 81.8L838.3 81.9L835.8 82.1L833.3 82.4L830.6 82.7L827.7 83.2L824.8 83.7L821.8 84.3L818.7 85.0L815.4 85.8L812.1 86.6L808.6 87.5L805.0 88.5L801.4 89.6L797.6 90.7L793.8 91.9L789.9 93.1L785.9 94.4L781.8 95.7L777.6 97.1L773.4 98.6L769.1 100.0L764.8 101.5L760.4 103.1L755.9 104.7L751.4 106.3L746.9 107.9L742.3 109.6L737.7 111.3L733.0 113.0L728.4 114.8L723.7 116.6L718.9 118.4L714.2 120.2L709.4 122.0L704.6 123.9L699.8 125.7L695.0 127.6L690.2 129.5L685.4 131.4L680.6 133.4L675.8 135.3L671.0 137.2L666.2 139.2L661.4 141.2L656.6 143.2L651.8 145.2L647.0 147.2L642.3 149.2L637.6 151.2L632.8 153.2L628.1 155.3L623.4 157.3L618.8 159.4L614.1 161.4L609.5 163.5L604.9 165.6L600.4 167.6L595.8 169.7L591.3 171.8L586.8 173.9L582.4 176.0L578.0 178.1L573.6 180.2L569.3 182.3L565.0 184.4L560.7 186.5L556.5 188.6L552.3 190.8L548.1 192.9L544.0 195.0L539.9 197.1L535.9 199.3L531.9 201.4L528.0 203.6L524.1 205.7L520.2 207.8L516.4 210.0L512.7 212.1L509.0 214.3L505.3 216.5L501.7 218.6L498.2 220.8L494.7 222.9L491.2 225.1L487.8 227.3L484.5 229.4L481.2 231.6L478.0 233.8L474.8 235.9L471.7 238.1L468.6 240.3L465.6 242.5L462.7 244.6L459.8 246.8L456.9 249.0L454.2 251.2L451.5 253.3L448.8 255.5L446.2 257.7L443.7 259.9L441.2 262.1L438.8 264.3L436.5 266.4L434.2 268.6L432.0 270.8L429.8 273.0L427.7 275.2L425.7 277.4L423.8 279.6L421.9 281.8L420.1 284.0L418.3 286.1L416.6 288.3L415.0 290.5L413.4 292.7L411.9 294.9L410.5 297.1L409.1 299.3L407.9 301.5L406.6 303.7L405.5 305.9L404.4 308.1L403.4 310.3L402.4 312.5L401.6 314.7L400.8 316.9L400.0 319.1L399.4 321.2L398.8 323.4L398.2 325.6L397.8 327.8L397.4 330.0L397.1 332.2L396.8 334.4L396.6 336.6L396.5 338.8L396.5 341.0L396.5 343.2L396.6 345.4L396.8 347.6L397.0 349.8L397.3 352.0L397.7 354.2L398.1 356.3L398.6 358.5L399.2 360.7L399.9 362.9L400.6 365.1L401.4 367.3L402.2 369.5L403.2 371.7L404.2 373.9L405.2 376.0L406.3 378.2L407.5 380.4L408.8 382.6M1001.8 164.4L1000.0 162.7L998.2 161.0L996.5 159.2L994.7 157.5L992.9 155.8L991.1 154.1L989.3 152.4L987.4 150.7L985.6 149.0L983.8 147.4L982.0 145.7L980.2 144.0L978.3 142.3L976.5 140.7L974.7 139.0L972.8 137.4L971.0 135.7L969.1 134.1L967.3 132.4L965.4 130.8L963.6 129.2L961.8 127.6L959.9 126.0L958.1 124.4L956.2 122.8L954.4 121.3L952.6 119.7L950.7 118.2L948.9 116.6L947.1 115.1L945.2 113.6L943.4 112.1L941.6 110.6L939.8 109.2L938.0 107.7L936.2 106.3L934.4 104.9L932.6 103.5L930.8 102.1L929.0 100.8L927.2 99.4L925.4 98.1L923.7 96.8L921.9 95.6L920.2 94.4L918.4 93.2L916.7 92.0L915.0 90.9L913.2 89.8L911.5 88.7L909.8 87.7L908.1 86.7L906.4 85.8L904.7 84.9L903.0 84.0L901.3 83.2L899.6 82.5L897.9 81.8L896.2 81.1L894.4 80.5L892.7 80.0L891.0 79.5L889.2 79.1L887.5 78.8L885.7 78.5L883.9 78.3L882.1 78.1L880.2 78.1L878.4 78.1L876.4 78.1L874.5 78.2L872.5 78.4L870.5 78.7L868.5 79.0L866.4 79.4L864.2 79.9L862.1 80.4L859.8 80.9L857.6 81.6L855.3 82.2L852.9 83.0L850.5 83.8L848.1 84.6L845.6 85.5L843.1 86.4L840.5 87.4L837.9 88.4L835.3 89.5L832.6 90.5L829.9 91.7L827.2 92.8L824.4 94.0L821.6 95.2L818.8 96.5L816.0 97.8L813.1 99.1L810.2 100.4L807.2 101.7L804.3 103.1L801.3 104.5L798.4 105.9L795.4 107.3L792.3 108.8L789.3 110.2L786.3 111.7L783.2 113.2L780.1 114.7L777.1 116.2L774.0 117.7L770.9 119.3L767.8 120.8L764.7 122.4L761.6 124.0L758.5 125.6L755.4 127.1L752.3 128.7L749.2 130.4L746.1 132.0L743.0 133.6L739.8 135.2L736.7 136.9L733.6 138.5L730.6 140.2L727.5 141.9L724.4 143.5L721.3 145.2L718.2 146.9L715.2 148.6L712.1 150.2L709.1 151.9L706.1 153.6L703.0 155.3L700.0 157.0L697.0 158.8L694.0 160.5L691.1 162.2L688.1 163.9L685.2 165.6L682.2 167.4L679.3 169.1L676.4 170.8L673.5 172.6L670.7 174.3L667.8 176.0L665.0 177.8L662.2 179.5L659.4 181.3L656.6 183.0L653.8 184.8L651.1 186.6L648.3 188.3L645.6 190.1L643.0 191.8L640.3 193.6L637.7 195.4L635.0 197.1L632.4 198.9L629.9 200.7L627.3 202.5L624.8 204.2L622.3 206.0L619.8 207.8L617.4 209.6L614.9 211.4L612.5 213.1L610.1 214.9L607.8 216.7L605.5 218.5L603.1 220.3L600.9 222.1L598.6 223.9L596.4 225.7L594.2 227.4L592.0 229.2L589.9 231.0L587.8 232.8L585.7 234.6L583.6 236.4L581.6 238.2L579.6 240.0L577.6 241.8L575.7 243.6L573.8 245.4L571.9 247.2L570.1 249.0L568.2 250.8L566.4 252.6L564.7 254.4L563.0 256.2L561.3 258.0L559.6 259.8L558.0 261.6L556.4 263.5L554.8 265.3L553.3 267.1L551.8 268.9L550.3 270.7L548.9 272.5L547.4 274.3M912.9 56.9L910.7 55.5L908.6 54.2L906.4 53.0L904.3 52.0L902.3 51.2L900.2 50.5L898.1 50.0L895.9 49.7L893.7 49.7L891.4 49.8L889.0 50.2L886.5 50.7L883.9 51.5L881.2 52.4L878.3 53.5L875.3 54.7L872.2 56.1L869.0 57.5L865.7 59.0L862.3 60.6L858.8 62.3L855.3 64.0L851.7 65.8L848.0 67.6L844.4 69.5L840.6 71.4L836.9 73.3L833.1 75.3L829.3 77.2L825.4 79.2L821.6 81.2L817.7 83.3L813.9 85.3L810.0 87.4L806.1 89.4L802.2 91.5L798.3 93.6L794.4 95.7L790.5 97.8L786.6 99.9L782.8 102.0L778.9 104.1L775.0 106.2L771.2 108.4L767.3 110.5L763.5 112.7L759.7 114.8L755.8 116.9L752.0 119.1L748.3 121.3L744.5 123.4L740.7 125.6L737.0 127.7L733.3 129.9L729.6 132.1L725.9 134.2L722.3 136.4L718.6 138.6L715.0 140.8L711.5 142.9L707.9 145.1L704.4 147.3L700.8 149.5L697.4 151.7L693.9 153.9L690.5 156.0L687.0 158.2L683.7 160.4L680.3 162.6L677.0 164.8L673.7 167.0L670.4 169.2L667.2 171.4L664.0 173.6L660.8 175.8L657.7 178.0L654.6 180.2L651.5 182.4L648.5 184.6L645.5 186.8L642.5 189.0L639.6 191.2L636.7 193.4L633.9 195.6L631.0 197.8L628.3 200.0L625.5 202.2L622.8 204.4L620.1 206.6L617.5 208.8L614.9 211.0L612.4 213.2L609.8 215.4L607.4 217.6L604.9 219.8L602.5 222.0L600.2 224.2L597.9 226.4L595.6 228.6L593.4 230.8L591.2 233.0L589.1 235.2L587.0 237.4L585.0 239.7L582.9 241.9L581.0 244.1L579.1 246.3L577.2 248.5L575.4 250.7L573.6 252.9L571.9 255.1L570.2 257.3L568.5 259.5L566.9 261.7L565.4 264.0L563.9 266.2L562.4 268.4L561.0 270.6L559.7 272.8L558.4 275.0L557.1 277.2L555.9 279.4L554.7 281.6L553.6 283.8L552.6 286.1L551.5 288.3L550.6 290.5L549.6 292.7L548.8 294.9L548.0 297.1L547.2 299.3L546.5 301.5L545.8 303.7L545.2 306.0L544.6 308.2L544.1 310.4L543.6 312.6L543.2 314.8L542.8 317.0L542.5 319.2L542.2 321.4L542.0 323.6L541.8 325.9L541.7 328.1L541.6 330.3L541.6 332.5L541.7 334.7L541.7 336.9L541.9 339.1L542.1 341.3L542.3 343.5L542.6 345.8L542.9 348.0L543.3 350.2L543.7 352.4L544.2 354.6L544.8 356.8L545.4 359.0L546.0 361.2L546.7 363.4L547.4 365.7L548.2 367.9L549.0 370.1L549.9 372.3L550.9 374.5L551.8 376.7L552.9 378.9L554.0 381.1L555.1 383.3L556.3 385.5L557.5 387.8L558.8 390.0L560.1 392.2L561.5 394.4L562.9 396.6L564.4 398.8L565.9 401.0L567.4 403.2L569.0 405.4L570.7 407.6L572.4 409.8L574.1 412.0L575.9 414.2L577.7 416.5L579.6 418.7L581.6 420.9L583.5 423.1L585.5 425.3L587.6 427.5L589.7 429.7L591.8 431.9L594.0 434.1L596.3 436.3L598.5 438.5L600.8 440.7L603.2 442.9L605.6 445.1L608.0 447.3L610.5 449.5M840.0 72.9L838.4 73.6L836.8 74.3L835.1 75.0L833.5 75.7L831.8 76.4L830.1 77.2L828.4 77.9L826.7 78.7L825.0 79.4L823.3 80.2L821.6 80.9L819.8 81.7L818.1 82.5L816.4 83.3L814.6 84.1L812.8 84.9L811.1 85.7L809.3 86.5L807.5 87.3L805.7 88.2L803.9 89.0L802.1 89.8L800.3 90.6L798.5 91.5L796.7 92.3L794.9 93.2L793.1 94.0L791.3 94.9L789.5 95.7L787.7 96.6L785.8 97.5L784.0 98.3L782.2 99.2L780.3 100.1L778.5 100.9L776.7 101.8L774.8 102.7L773.0 103.6L771.2 104.5L769.3 105.3L767.5 106.2L765.7 107.1L763.8 108.0L762.0 108.9L760.2 109.8L758.3 110.7L756.5 111.6L754.6 112.5L752.8 113.4L751.0 114.3L749.1 115.2L747.3 116.1L745.5 117.0L743.6 117.9L741.8 118.9L740.0 119.8L738.2 120.7L736.4 121.6L734.5 122.5L732.7 123.4L730.9 124.4L729.1 125.3L727.3 126.2L725.5 127.1L723.7 128.0L721.9 129.0L720.1 129.9L718.3 130.8L716.5 131.7L714.7 132.7L712.9 133.6L711.1 134.5L709.3 135.5L707.5 136.4L705.8 137.3L704.0 138.3L702.2 139.2L700.5 140.1L698.7 141.1L697.0 142.0L695.2 142.9L693.5 143.9L691.7 144.8L690.0 145.8L688.3 146.7L686.5 147.6L684.8 148.6L683.1 149.5L681.4 150.5L679.7 151.4L678.0 152.3L676.3 153.3L674.6 154.2L672.9 155.2L671.2 156.1L669.5 157.1L667.8 158.0L666.2 159.0L664.5 159.9L662.9 160.8L661.2 161.8L659.6 162.7L657.9 163.7L656.3 164.6L654.6 165.6L653.0 166.5L651.4 167.5L649.8 168.4L648.2 169.4L646.6 170.3L645.0 171.3L643.4 172.2L641.8 173.2L640.3 174.1L638.7 175.1L637.1 176.0L635.6 177.0L634.0 178.0L632.5 178.9L630.9 179.9L629.4 180.8L627.9 181.8L626.4 182.7L624.9 183.7L623.4 184.6L621.9 185.6L620.4 186.5L618.9 187.5L617.4 188.5L616.0 189.4L614.5 190.4L613.1 191.3L611.6 192.3L610.2 193.2L608.7 194.2L607.3 195.2L605.9 196.1L604.5 197.1L603.1 198.0L601.7 199.0L600.3 200.0L598.9 200.9L597.6 201.9L596.2 202.8L594.9 203.8L593.5 204.7L592.2 205.7L590.8 206.7L589.5 207.6L588.2 208.6L586.9 209.5L585.6 210.5L584.3 211.5L583.0 212.4L581.8 213.4L580.5 214.4L579.3 215.3L578.0 216.3L576.8 217.2L575.5 218.2L574.3 219.2L573.1 220.1L571.9 221.1L570.7 222.0L569.5 223.0L568.3 224.0L567.2 224.9L566.0 225.9L564.9 226.9L563.7 227.8L562.6 228.8L561.5 229.8L560.3 230.7L559.2 231.7L558.1 232.6L557.0 233.6L556.0 234.6L554.9 235.5L553.8 236.5L552.8 237.5L551.7 238.4L550.7 239.4L549.7 240.4L548.7 241.3L547.7 242.3L546.7 243.2L545.7 244.2L544.7 245.2L543.7 246.1L542.8 247.1L541.8 248.1L540.9 249.0L539.9 250.0L539.0 251.0L538.1 251.9L537.2 252.9L536.3 253.9L535.4 254.8L534.6 255.8" fill="none" stroke="#646464" stroke-width="1.3" stroke-dasharray="1.39 2.29"/>
<path d="M906.2 77.6L904.2 76.9L902.1 76.3L900.1 75.7L898.1 75.2L896.0 74.9L894.0 74.6L891.9 74.4L889.8 74.3L887.7 74.3L885.5 74.3L883.4 74.5L881.1 74.8L878.9 75.1L876.6 75.6L874.3 76.1L871.9 76.7L869.5 77.4L867.0 78.2L864.5 79.0L861.9 79.9L859.3 80.9L856.6 81.9L853.9 83.0L851.1 84.2L848.3 85.4L845.5 86.7L842.6 88.0L839.7 89.3L836.7 90.7L833.7 92.1L830.7 93.6L827.6 95.1L824.6 96.6L821.5 98.2L818.3 99.7L815.2 101.3L812.0 103.0L808.8 104.6L805.6 106.3L802.4 108.0L799.1 109.7L795.9 111.4L792.6 113.2L789.4 114.9L786.1 116.7L782.8 118.5L779.6 120.3L776.3 122.1L773.0 123.9L769.7 125.8L766.4 127.6L763.1 129.5L759.8 131.3L756.6 133.2L753.3 135.1L750.0 137.0L746.8 138.9L743.5 140.8L740.3 142.7L737.0 144.6L733.8 146.5L730.6 148.5L727.4 150.4L724.2 152.3L721.0 154.3L717.9 156.2L714.7 158.2L711.6 160.1L708.5 162.1L705.4 164.1L702.3 166.0L699.2 168.0L696.2 170.0L693.2 172.0L690.2 174.0L687.2 175.9L684.2 177.9L681.3 179.9L678.3 181.9L675.4 183.9L672.6 185.9L669.7 187.9L666.9 189.9L664.1 191.9L661.3 193.9L658.6 195.9L655.8 197.9L653.1 200.0L650.5 202.0L647.8 204.0L645.2 206.0L642.6 208.0L640.1 210.1L637.6 212.1L635.1 214.1L632.6 216.1L630.2 218.2L627.7 220.2L625.4 222.2L623.0 224.2L620.7 226.3L618.4 228.3L616.2 230.3L614.0 232.4L611.8 234.4L609.7 236.4L607.6 238.5L605.5 240.5L603.4 242.6L601.4 244.6L599.5 246.6L597.5 248.7L595.6 250.7L593.8 252.8L591.9 254.8L590.1 256.9L588.4 258.9L586.7 261.0L585.0 263.0" fill="none" stroke="#2db88a" stroke-width="1.4" stroke-dasharray="1.39 2.29"/>
<path d="M1044.9 74.3L1047.2 74.4L1049.6 74.6M754.8 74.8L755.7 75.2L756.4 75.6L756.9 76.1L757.2 76.6L757.3 77.2L757.2 77.9L756.9 78.7L756.5 79.5L755.9 80.4L755.2 81.3L754.3 82.3L753.4 83.3L752.3 84.4L751.1 85.5L749.8 86.6L748.4 87.8L746.9 89.1L745.3 90.3L743.7 91.6L742.0 93.0L740.3 94.3L738.5 95.7L736.6 97.1L734.8 98.6L732.8 100.0L730.9 101.5L728.8 103.0L726.8 104.5L724.8 106.1L722.7 107.6L720.6 109.2L718.5 110.8L716.3 112.4L714.2 114.0L712.0 115.6L709.8 117.3L707.7 118.9L705.5 120.6L703.3 122.3L701.1 123.9L698.9 125.6L696.7 127.3L694.5 129.0L692.4 130.8L690.2 132.5L688.0 134.2L685.8 135.9L683.7 137.7L681.5 139.4L679.4 141.2L677.2 143.0L675.1 144.7L673.0 146.5L670.9 148.3L668.8 150.0L666.8 151.8L664.7 153.6L662.7 155.4L660.7 157.2L658.7 159.0L656.7 160.8L654.7 162.6L652.7 164.4L650.8 166.2L648.9 168.1L647.0 169.9L645.1 171.7L643.3 173.5L641.4 175.4L639.6 177.2L637.8 179.0L636.1 180.9L634.3 182.7L632.6 184.5L630.9 186.4L629.2 188.2L627.6 190.1L626.0 191.9L624.4 193.8L622.8 195.6L621.3 197.5L619.7 199.3L618.2 201.2L616.8 203.0L615.3 204.9L613.9 206.7L612.5 208.6L611.2 210.5L609.8 212.3L608.5 214.2L607.2 216.1L606.0 217.9L604.8 219.8L603.6 221.7L602.4 223.5L601.3 225.4L600.2 227.3L599.1 229.2L598.1 231.0L597.0 232.9L596.1 234.8L595.1 236.7L594.2 238.5L593.3 240.4L592.4 242.3L591.6 244.2L590.8 246.1L590.0 247.9L589.3 249.8L588.6 251.7L587.9 253.6L587.3 255.5L586.6 257.3L586.1 259.2L585.5 261.1L585.0 263.0" fill="none" stroke="#2db88a" stroke-width="1.4" stroke-dasharray="1.39 2.29"/>
<path d="M920.0 135.8L917.7 134.7L915.5 133.7L913.2 132.6L911.0 131.7L908.7 130.7L906.5 129.8L904.3 129.0L902.0 128.2L899.8 127.4L897.5 126.7L895.3 126.0L893.0 125.4L890.8 124.8L888.5 124.3L886.3 123.8L884.0 123.4L881.7 123.0L879.4 122.7L877.1 122.4L874.8 122.2L872.5 122.1L870.1 122.0L867.8 121.9L865.4 121.9L863.0 122.0L860.6 122.1L858.1 122.3L855.7 122.5L853.2 122.8L850.7 123.1L848.1 123.5L845.6 123.9L843.0 124.4L840.4 124.9L837.7 125.5L835.1 126.1L832.4 126.8L829.6 127.5L826.9 128.3L824.1 129.1L821.3 130.0L818.4 130.9L815.6 131.8L812.7 132.8L809.7 133.8L806.8 134.9L803.8 136.0L800.8 137.1L797.8 138.3L794.7 139.5L791.7 140.7L788.6 142.0L785.5 143.3L782.3 144.6L779.2 146.0L776.0 147.3L772.8 148.7L769.6 150.2L766.4 151.6L763.2 153.1L759.9 154.6L756.7 156.2L753.4 157.7L750.1 159.3L746.8 160.9L743.5 162.5L740.2 164.1L736.9 165.7L733.6 167.4L730.3 169.1L727.0 170.8L723.7 172.5L720.4 174.2L717.1 175.9L713.8 177.7L710.5 179.4L707.2 181.2L703.9 183.0L700.7 184.8L697.4 186.6L694.1 188.4L690.9 190.3L687.6 192.1L684.4 194.0L681.2 195.8L678.0 197.7L674.8 199.6L671.6 201.5L668.4 203.4L665.3 205.3L662.2 207.2L659.1 209.1L656.0 211.1L652.9 213.0L649.9 214.9L646.9 216.9L643.9 218.8L640.9 220.8L637.9 222.8L635.0 224.7L632.1 226.7L629.2 228.7L626.4 230.7L623.6 232.7L620.8 234.7L618.0 236.7L615.3 238.7L612.6 240.7L609.9 242.7L607.3 244.7L604.7 246.7L602.1 248.7L599.5 250.8L597.0 252.8L594.5 254.8L592.1 256.9L589.7 258.9L587.3 261.0L585.0 263.0" fill="none" stroke="#2db88a" stroke-width="1.4" stroke-dasharray="1.39 2.29"/>
<path d="M900.0 173.3L897.8 172.5L895.6 171.7L893.5 171.0L891.3 170.3L889.1 169.6L886.9 168.9L884.7 168.3L882.5 167.7L880.3 167.1L878.1 166.6L875.9 166.1L873.7 165.6L871.5 165.1L869.3 164.7L867.1 164.3L864.9 164.0L862.6 163.6L860.4 163.3L858.1 163.1L855.9 162.8L853.6 162.6L851.3 162.5L849.1 162.3L846.8 162.2L844.4 162.2L842.1 162.1L839.8 162.1L837.5 162.2L835.1 162.2L832.7 162.3L830.3 162.5L827.9 162.6L825.5 162.8L823.1 163.1L820.7 163.3L818.2 163.6L815.7 163.9L813.2 164.3L810.7 164.7L808.2 165.1L805.7 165.5L803.1 166.0L800.5 166.5L797.9 167.1L795.3 167.6L792.7 168.2L790.1 168.9L787.4 169.5L784.7 170.2L782.1 170.9L779.3 171.7L776.6 172.4L773.9 173.2L771.1 174.0L768.4 174.9L765.6 175.8L762.8 176.6L760.0 177.6L757.2 178.5L754.3 179.5L751.5 180.4L748.6 181.5L745.7 182.5L742.8 183.5L739.9 184.6L737.0 185.7L734.1 186.8L731.2 187.9L728.3 189.1L725.3 190.3L722.4 191.5L719.4 192.7L716.4 193.9L713.5 195.1L710.5 196.4L707.5 197.7L704.5 198.9L701.6 200.2L698.6 201.6L695.6 202.9L692.6 204.2L689.6 205.6L686.6 207.0L683.6 208.4L680.6 209.8L677.7 211.2L674.7 212.6L671.7 214.0L668.7 215.5L665.8 216.9L662.8 218.4L659.9 219.9L656.9 221.4L654.0 222.9L651.0 224.4L648.1 225.9L645.2 227.5L642.3 229.0L639.4 230.5L636.6 232.1L633.7 233.7L630.8 235.2L628.0 236.8L625.2 238.4L622.4 240.0L619.6 241.6L616.8 243.2L614.1 244.8L611.3 246.5L608.6 248.1L605.9 249.7L603.2 251.4L600.5 253.0L597.9 254.7L595.3 256.3L592.7 258.0L590.1 259.7L587.5 261.3L585.0 263.0" fill="none" stroke="#2db88a" stroke-width="1.4" stroke-dasharray="1.39 2.29"/>
<path d="M820.0 217.5L819.4 217.8L818.7 218.0L818.1 218.3L817.5 218.6L816.9 218.8L816.2 219.1L815.6 219.4L815.0 219.7L814.3 219.9L813.7 220.2L813.1 220.5L812.5 220.8L811.8 221.1L811.2 221.3L810.6 221.6L809.9 221.9L809.3 222.2L808.7 222.5L808.1 222.7L807.4 223.0L806.8 223.3L806.2 223.6L805.5 223.9L804.9 224.2L804.3 224.5L803.7 224.8L803.0 225.1L802.4 225.3L801.8 225.6L801.1 225.9L800.5 226.2L799.9 226.5L799.2 226.8L798.6 227.1L798.0 227.4L797.4 227.7L796.7 228.0L796.1 228.3L795.5 228.6L794.8 228.9L794.2 229.2L793.6 229.5L793.0 229.8L792.3 230.1L791.7 230.5L791.1 230.8L790.4 231.1L789.8 231.4L789.2 231.7L788.6 232.0L787.9 232.3L787.3 232.6L786.7 232.9L786.0 233.3L785.4 233.6L784.8 233.9L784.2 234.2L783.5 234.5L782.9 234.8L782.3 235.2L781.6 235.5L781.0 235.8L780.4 236.1L779.8 236.4L779.1 236.8L778.5 237.1L777.9 237.4L777.2 237.7L776.6 238.1L776.0 238.4L775.4 238.7L774.7 239.0L774.1 239.4L773.5 239.7L772.9 240.0L772.2 240.3L771.6 240.7L771.0 241.0L770.4 241.3L769.7 241.7L769.1 242.0L768.5 242.3L767.9 242.7L767.2 243.0L766.6 243.3L766.0 243.7L765.4 244.0L764.8 244.4L764.1 244.7L763.5 245.0L762.9 245.4L762.3 245.7L761.6 246.1L761.0 246.4L760.4 246.7L759.8 247.1L759.2 247.4L758.5 247.8L757.9 248.1L757.3 248.5L756.7 248.8L756.1 249.1L755.4 249.5L754.8 249.8L754.2 250.2L753.6 250.5L753.0 250.9L752.4 251.2L751.7 251.6L751.1 251.9L750.5 252.3L749.9 252.6L749.3 253.0L748.7 253.3L748.1 253.7L747.4 254.0L746.8 254.4L746.2 254.7L745.6 255.1" fill="none" stroke="#4cc46e" stroke-width="1.4" stroke-dasharray="1.39 2.29"/>
<path d="M850.0 206.3L849.2 206.8L848.4 207.3L847.5 207.9L846.7 208.4L845.9 208.9L845.1 209.4L844.3 210.0L843.5 210.5L842.6 211.0L841.8 211.6L841.0 212.1L840.2 212.6L839.4 213.2L838.5 213.7L837.7 214.2L836.9 214.8L836.1 215.3L835.3 215.9L834.5 216.4L833.6 217.0L832.8 217.5L832.0 218.1L831.2 218.6L830.4 219.2L829.6 219.8L828.8 220.3L827.9 220.9L827.1 221.4L826.3 222.0L825.5 222.6L824.7 223.1L823.9 223.7L823.1 224.3L822.3 224.8L821.4 225.4L820.6 226.0L819.8 226.6L819.0 227.1L818.2 227.7L817.4 228.3L816.6 228.9L815.8 229.5L815.0 230.0L814.2 230.6L813.4 231.2L812.6 231.8L811.7 232.4L810.9 233.0L810.1 233.6L809.3 234.2L808.5 234.7L807.7 235.3L806.9 235.9L806.1 236.5L805.3 237.1L804.5 237.7L803.7 238.3L802.9 238.9L802.1 239.5L801.3 240.1L800.5 240.7L799.8 241.3L799.0 241.9L798.2 242.5L797.4 243.2L796.6 243.8L795.8 244.4L795.0 245.0L794.2 245.6L793.4 246.2L792.6 246.8L791.9 247.4L791.1 248.0L790.3 248.7L789.5 249.3L788.7 249.9L787.9 250.5L787.2 251.1L786.4 251.7L785.6 252.4L784.8 253.0L784.1 253.6L783.3 254.2L782.5 254.9L781.7 255.5L781.0 256.1L780.2 256.7L779.4 257.4L778.7 258.0L777.9 258.6L777.1 259.2L776.4 259.9L775.6 260.5L774.9 261.1L774.1 261.8L773.3 262.4L772.6 263.0L771.8 263.7L771.1 264.3L770.3 264.9L769.6 265.6L768.8 266.2L768.1 266.8L767.3 267.5L766.6 268.1L765.8 268.8L765.1 269.4L764.3 270.0L763.6 270.7L762.9 271.3L762.1 272.0L761.4 272.6L760.7 273.2L759.9 273.9L759.2 274.5L758.5 275.2L757.7 275.8L757.0 276.5L756.3 277.1" fill="none" stroke="#4cc46e" stroke-width="1.4" stroke-dasharray="1.39 2.29"/>
<path d="M938.3 126.7L936.5 127.4L934.7 128.1L932.8 128.8L931.0 129.6L929.3 130.4L927.5 131.3L925.7 132.2L923.9 133.1L922.2 134.1L920.4 135.0L918.6 136.1L916.9 137.1L915.1 138.2L913.4 139.3L911.6 140.4L909.9 141.5L908.2 142.7L906.4 143.9L904.7 145.1L902.9 146.4L901.2 147.7L899.4 148.9L897.7 150.3L896.0 151.6L894.2 152.9L892.5 154.3L890.7 155.7L889.0 157.1L887.2 158.5L885.5 159.9L883.7 161.4L882.0 162.9L880.2 164.3L878.5 165.8L876.8 167.4L875.0 168.9L873.3 170.4L871.5 172.0L869.8 173.5L868.0 175.1L866.3 176.7L864.5 178.3L862.8 179.9L861.0 181.5L859.3 183.1L857.5 184.8L855.8 186.4L854.0 188.1L852.3 189.7L850.6 191.4L848.8 193.1L847.1 194.8L845.4 196.4L843.6 198.2L841.9 199.9L840.2 201.6L838.5 203.3L836.8 205.0L835.1 206.8L833.4 208.5L831.7 210.3L830.0 212.0L828.3 213.8L826.6 215.5L824.9 217.3L823.2 219.1L821.6 220.8L819.9 222.6L818.2 224.4L816.6 226.2L815.0 228.0L813.3 229.8L811.7 231.6L810.1 233.4L808.5 235.2L806.9 237.0L805.3 238.9L803.7 240.7L802.1 242.5L800.5 244.3L799.0 246.2L797.4 248.0L795.9 249.8L794.3 251.7L792.8 253.5L791.3 255.4L789.8 257.2L788.3 259.1L786.8 260.9L785.4 262.8L783.9 264.6L782.5 266.5L781.0 268.3L779.6 270.2L778.2 272.1L776.8 273.9L775.4 275.8L774.0 277.7L772.7 279.5L771.3 281.4L770.0 283.3L768.7 285.1L767.3 287.0L766.0 288.9L764.8 290.8L763.5 292.6L762.2 294.5L761.0 296.4L759.8 298.3L758.6 300.2L757.4 302.0L756.2 303.9L755.0 305.8L753.8 307.7L752.7 309.6L751.6 311.4L750.5 313.3L749.4 315.2L748.3 317.1" fill="none" stroke="#c5e02a" stroke-width="1.4" stroke-dasharray="1.39 2.29"/>
<path d="M906.2 77.6L907.6 78.1L909.0 78.6L910.4 79.2L911.9 79.8L913.3 80.5L914.7 81.1L916.2 81.8L917.6 82.6L919.1 83.3L920.5 84.1L922.0 84.9" fill="none" stroke="#2db88a" stroke-width="1.6" stroke-linecap="round"/>
<rect x="920.9" y="83.8" width="2.2" height="2.2" fill="#f26b4b"/>
<path d="M1044.9 74.3L1043.8 74.3L1042.8 74.4L1041.8 74.4L1040.9 74.5L1040.2 74.6L1039.4 74.8L1038.8 75.0L1038.2 75.2L1037.7 75.4L1037.3 75.6L1036.9 75.9" fill="none" stroke="#2db88a" stroke-width="1.6" stroke-linecap="round"/>
<rect x="1035.8" y="74.8" width="2.2" height="2.2" fill="#f26b4b"/>
<path d="M920.0 135.8L920.9 136.2L921.8 136.7L922.7 137.1L923.6 137.5L924.5 138.0L925.4 138.4L926.4 138.9L927.3 139.4L928.2 139.8L929.1 140.3L930.0 140.8" fill="none" stroke="#2db88a" stroke-width="1.6" stroke-linecap="round"/>
<rect x="928.9" y="139.7" width="2.2" height="2.2" fill="#f26b4b"/>
<path d="M900.0 173.3L901.2 173.8L902.4 174.2L903.5 174.7L904.7 175.2L905.9 175.7L907.1 176.2L908.3 176.7L909.5 177.2L910.6 177.7L911.8 178.3L913.0 178.8" fill="none" stroke="#2db88a" stroke-width="1.6" stroke-linecap="round"/>
<rect x="911.9" y="177.7" width="2.2" height="2.2" fill="#f26b4b"/>
<path d="M820.0 217.5L821.1 217.1L822.2 216.7L823.3 216.2L824.4 215.8L825.5 215.4L826.6 215.0L827.6 214.6L828.7 214.2L829.8 213.8L830.9 213.4L832.0 213.0" fill="none" stroke="#4cc46e" stroke-width="1.6" stroke-linecap="round"/>
<rect x="830.9" y="211.9" width="2.2" height="2.2" fill="#f26b4b"/>
<path d="M850.0 206.3L851.6 205.3L853.3 204.3L854.9 203.3L856.5 202.4L858.2 201.4L859.8 200.4L861.5 199.5L863.1 198.6L864.7 197.6L866.4 196.7L868.0 195.8" fill="none" stroke="#4cc46e" stroke-width="1.6" stroke-linecap="round"/>
<rect x="866.9" y="194.7" width="2.2" height="2.2" fill="#f26b4b"/>
<path d="M938.3 126.7L941.4 125.6L944.6 124.7L947.8 123.9L951.1 123.2L954.4 122.6L957.8 122.1L961.2 121.8L964.8 121.6L968.4 121.5L972.0 121.5L975.8 121.7" fill="none" stroke="#c5e02a" stroke-width="1.6" stroke-linecap="round"/>
<rect x="974.7" y="120.6" width="2.2" height="2.2" fill="#f26b4b"/>
<path d="M840.3 74L857.4 66.2" fill="none" stroke="#8c8c8c" stroke-width="1.4" stroke-linecap="round"/>
<path d="M917.3 60L943.1 80" fill="none" stroke="#8c8c8c" stroke-width="1.4" stroke-linecap="round"/>
<path d="M838.7 143.4L866.7 148.7" fill="none" stroke="#8c8c8c" stroke-width="1.4" stroke-linecap="round"/>
<path d="M901 137.8L907.2 150.2" fill="none" stroke="#8c8c8c" stroke-width="1.4" stroke-linecap="round"/>
<path d="M1003.7 165.8L1017.7 181.4" fill="none" stroke="#8c8c8c" stroke-width="1.4" stroke-linecap="round"/>
<path d="M792 173.6L789 184.5" fill="none" stroke="#8c8c8c" stroke-width="1.4" stroke-linecap="round"/>
<path d="M562.2 268.0L562.9 266.7L563.6 265.4L564.5 264.1L565.4 262.9L566.3 261.6L567.4 260.4L568.5 259.2L569.6 258.0L570.9 256.8L572.2 255.7L573.5 254.6L574.9 253.5L576.3 252.4L577.8 251.5L579.3 250.5L580.8 249.6L582.3 248.7L583.9 247.9L585.4 247.2L587.0 246.5L588.5 245.9L590.1 245.3L591.6 244.8L593.1 244.3L594.6 244.0L596.0 243.6L597.5 243.4L598.8 243.2L600.2 243.1L601.5 243.1L602.7 243.1L603.9 243.2L605.1 243.4L606.1 243.6L607.2 244.0L608.1 244.3L609.0 244.8L609.8 245.3L610.6 245.9L611.3 246.5L611.9 247.2L612.5 247.9L613.0 248.7L613.4 249.6L613.7 250.5L614.0 251.5L614.2 252.4L614.3 253.5L614.4 254.6L614.4 255.7L614.3 256.8L614.2 258.0L614.0 259.2L613.8 260.4L613.4 261.6L613.1 262.9L612.6 264.1L612.2 265.4L611.6 266.7L611.0 268.0L610.4 269.2L609.7 270.5L608.9 271.8L608.1 273.0L607.3 274.2L606.4 275.4L605.5 276.6L604.6 277.8L603.6 278.9L602.5 280.0L601.5 281.1L600.4 282.1L599.2 283.1L598.1 284.1L596.9 285.0L595.7 285.8L594.5 286.6L593.2 287.4L591.9 288.1L590.7 288.7L589.4 289.3L588.1 289.9L586.7 290.3L585.4 290.8L584.1 291.1L582.8 291.4L581.5 291.6L580.2 291.8L578.9 291.9L577.6 291.9L576.3 291.9L575.1 291.8L573.9 291.6L572.7 291.4L571.5 291.1L570.4 290.8L569.3 290.3L568.3 289.9L567.3 289.3L566.3 288.7L565.4 288.1L564.6 287.4L563.8 286.6L563.1 285.8L562.5 285.0L561.9 284.1L561.4 283.1L560.9 282.1L560.6 281.1L560.3 280.0L560.1 278.9L560.0 277.8L560.0 276.6L560.1 275.4L560.2 274.2L560.4 273.0L560.8 271.8L561.2 270.5L561.7 269.2L562.2 268.0Z" fill="none" stroke="#2db88a" stroke-width="2"/>
<path d="M728.4 273.5L728.7 272.2L729.1 270.9L729.6 269.6L730.1 268.4L730.7 267.1L731.3 265.9L732.0 264.7L732.8 263.5L733.7 262.3L734.6 261.2L735.5 260.1L736.5 259.0L737.6 257.9L738.7 257.0L739.8 256.0L741.0 255.1L742.2 254.2L743.5 253.4L744.8 252.7L746.1 252.0L747.4 251.4L748.7 250.8L750.0 250.3L751.4 249.8L752.7 249.5L754.0 249.2L755.4 248.9L756.7 248.7L758.0 248.6L759.3 248.6L760.5 248.6L761.8 248.7L763.0 248.9L764.2 249.2L765.3 249.5L766.4 249.8L767.5 250.3L768.5 250.8L769.5 251.4L770.4 252.0L771.3 252.7L772.1 253.4L772.9 254.2L773.7 255.1L774.3 256.0L775.0 257.0L775.5 257.9L776.0 259.0L776.5 260.1L776.8 261.2L777.2 262.3L777.4 263.5L777.6 264.7L777.8 265.9L777.8 267.1L777.9 268.4L777.8 269.6L777.7 270.9L777.5 272.2L777.3 273.5L777.0 274.7L776.6 276.0L776.2 277.3L775.8 278.5L775.2 279.7L774.7 281.0L774.0 282.1L773.4 283.3L772.6 284.4L771.8 285.6L771.0 286.6L770.1 287.7L769.2 288.7L768.2 289.6L767.2 290.5L766.2 291.4L765.1 292.2L764.0 293.0L762.9 293.7L761.7 294.3L760.5 294.9L759.3 295.4L758.1 295.9L756.8 296.3L755.6 296.7L754.3 297.0L753.0 297.2L751.7 297.4L750.5 297.5L749.2 297.5L747.9 297.5L746.7 297.4L745.4 297.2L744.2 297.0L743.0 296.7L741.8 296.3L740.6 295.9L739.5 295.4L738.4 294.9L737.3 294.3L736.3 293.7L735.4 293.0L734.4 292.2L733.6 291.4L732.8 290.5L732.0 289.6L731.3 288.7L730.7 287.7L730.1 286.6L729.6 285.6L729.1 284.4L728.8 283.3L728.5 282.1L728.2 281.0L728.1 279.7L728.0 278.5L728.0 277.3L728.1 276.0L728.2 274.7L728.4 273.5Z" fill="none" stroke="#4cc46e" stroke-width="2"/>
<path d="M736.6 324.3L736.6 323.0L736.7 321.7L736.9 320.5L737.1 319.2L737.4 317.9L737.8 316.7L738.3 315.5L738.8 314.3L739.4 313.1L740.0 312.0L740.8 310.9L741.5 309.8L742.4 308.8L743.3 307.8L744.2 306.8L745.2 305.9L746.2 305.1L747.3 304.3L748.4 303.6L749.6 302.9L750.8 302.3L752.0 301.7L753.2 301.2L754.5 300.8L755.7 300.4L757.0 300.1L758.3 299.9L759.6 299.7L760.9 299.6L762.2 299.6L763.5 299.6L764.8 299.7L766.0 299.9L767.3 300.1L768.5 300.4L769.7 300.8L770.9 301.2L772.1 301.7L773.2 302.3L774.3 302.9L775.3 303.6L776.4 304.3L777.3 305.1L778.3 305.9L779.2 306.8L780.0 307.8L780.8 308.8L781.5 309.8L782.2 310.9L782.9 312.0L783.5 313.1L784.0 314.3L784.5 315.5L784.9 316.7L785.2 317.9L785.5 319.2L785.8 320.5L785.9 321.7L786.0 323.0L786.1 324.3L786.1 325.6L786.0 326.9L785.9 328.2L785.7 329.5L785.4 330.7L785.1 332.0L784.7 333.2L784.3 334.4L783.8 335.5L783.3 336.7L782.7 337.8L782.0 338.9L781.3 339.9L780.5 340.9L779.7 341.8L778.9 342.7L778.0 343.6L777.0 344.4L776.0 345.1L775.0 345.8L773.9 346.4L772.8 347.0L771.7 347.5L770.5 347.9L769.3 348.3L768.1 348.6L766.8 348.8L765.6 349.0L764.3 349.1L763.0 349.1L761.7 349.1L760.4 349.0L759.1 348.8L757.8 348.6L756.5 348.3L755.2 347.9L754.0 347.5L752.7 347.0L751.5 346.4L750.3 345.8L749.1 345.1L748.0 344.4L746.9 343.6L745.8 342.7L744.8 341.8L743.8 340.9L742.9 339.9L742.0 338.9L741.2 337.8L740.4 336.7L739.8 335.5L739.1 334.4L738.6 333.2L738.1 332.0L737.6 330.7L737.3 329.5L737.0 328.2L736.8 326.9L736.7 325.6L736.6 324.3Z" fill="none" stroke="#c5e02a" stroke-width="2"/>
<text x="586.4" y="271.1" class="ml">ORI</text>
<text x="752.9" y="276.0" class="ml">STA</text>
<text x="761.2" y="326.7" class="ml">OER</text>
<path d="M742.6 255.1h6M745.6 252.1v6" stroke="#ff0000" stroke-width="1.4"/>
<path d="M753.3 277.1h6M756.3 274.1v6" stroke="#ff0000" stroke-width="1.4"/>
<path d="M745.3 317.1h6M748.3 314.1v6" stroke="#ff0000" stroke-width="1.4"/>
<path d="M580.0 264.8h5M582.5 262.3v5" stroke="#ff0000" stroke-width="1.2"/>
<path d="M582.7 266.8h5M585.2 264.3v5" stroke="#ff0000" stroke-width="1.2"/>
<path d="M585.1 268.6h5M587.6 266.1v5" stroke="#ff0000" stroke-width="1.2"/>
<text x="316.3" y="29.90" class="leg">UK0020</text>
<text x="316.3" y="42.95" class="leg">Beg: 20251027 21:55:57 (sol = 214.38&#176;)</text>
<text x="316.3" y="56.00" class="leg">End: 20251028 05:26:40 (sol = 214.69&#176;)</text>
<text x="316.3" y="69.05" class="leg">--------------------------------------</text>
<text x="316.3" y="82.10" class="leg">...: 6</text>
<text x="316.3" y="95.15" class="leg">ORI: 4</text>
<text x="316.3" y="108.20" class="leg">STA: 2</text>
<text x="316.3" y="121.25" class="leg">OER: 1</text>
<path d="M74.7 842.3V641.4M219.0 842.3V641.4M365.0 842.3V641.4M506.0 842.3V641.4M650.7 842.3V641.4M797.0 842.3V641.4M940.0 842.3V641.4M1091.2 842.3V641.4M1239.0 842.3V641.4M1394.2 842.3V641.4M1547.8 842.3V641.4M1687.1 842.3V641.4" fill="none" stroke="#6e6e6e" stroke-width="1.6" stroke-dasharray="2.08 3.47"/>
<text transform="translate(149.0 696.3) rotate(-90)" class="mon" textLength="53.3" lengthAdjust="spacingAndGlyphs">APR</text>
<text transform="translate(294.0 699.7) rotate(-90)" class="mon" textLength="55.0" lengthAdjust="spacingAndGlyphs">MAY</text>
<text transform="translate(436.2 689.7) rotate(-90)" class="mon" textLength="46.7" lengthAdjust="spacingAndGlyphs">JUN</text>
<text transform="translate(576.2 686.3) rotate(-90)" class="mon" textLength="45.0" lengthAdjust="spacingAndGlyphs">JUL</text>
<text transform="translate(724.0 699.7) rotate(-90)" class="mon" textLength="55.0" lengthAdjust="spacingAndGlyphs">AUG</text>
<text transform="translate(871.7 693.0) rotate(-90)" class="mon" textLength="48.3" lengthAdjust="spacingAndGlyphs">SEP</text>
<text transform="translate(1017.3 699.7) rotate(-90)" class="mon" textLength="56.7" lengthAdjust="spacingAndGlyphs">OCT</text>
<text transform="translate(1169.7 703.0) rotate(-90)" class="mon" textLength="58.3" lengthAdjust="spacingAndGlyphs">NOV</text>
<text transform="translate(1319.7 701.3) rotate(-90)" class="mon" textLength="56.6" lengthAdjust="spacingAndGlyphs">DEC</text>
<text transform="translate(1469.5 689.7) rotate(-90)" class="mon" textLength="46.7" lengthAdjust="spacingAndGlyphs">JAN</text>
<text transform="translate(1628.0 694.7) rotate(-90)" class="mon" textLength="48.4" lengthAdjust="spacingAndGlyphs">FEB</text>
<text transform="translate(1765.7 703.0) rotate(-90)" class="mon" textLength="56.7" lengthAdjust="spacingAndGlyphs">MAR</text>
<line x1="1071.5" y1="842.3" x2="1071.5" y2="641.4" stroke="#ff0000" stroke-width="1.4" stroke-dasharray="5.06 2.19"/>
<line x1="1073.5" y1="842.3" x2="1073.5" y2="641.4" stroke="#ff0000" stroke-width="1.4" stroke-dasharray="5.06 2.19"/>
<path d="M105.8 834.10H130.0M165.0 834.10H345.0M365.8 834.10H625.0M635.8 834.10H787.0M807.0 834.10H900.0M920.0 834.10H973.0M984.2 834.10H1065.8M1082.0 834.10H1203.8M1244.2 834.10H1325.8M1337.0 834.10H1355.8M1380.8 834.10H1443.8M1458.8 834.10H1512.0M1523.0 834.10H1547.0M1724.0 834.10H1748.0M1757.9 834.10H1781.9" stroke="#c2df23" stroke-width="3.8" fill="none"/>
<path d="M165.0 817.72H189.2M224.2 817.72H287.0M312.0 817.72H341.0M365.8 817.72H493.0M508.0 817.72H654.2M704.2 817.72H738.0M773.0 817.72H846.2M871.2 817.72H988.0M1003.0 817.72H1017.0M1062.0 817.72H1213.0M1244.2 817.72H1266.7M1293.0 817.72H1315.8M1342.0 817.72H1365.0M1385.8 817.72H1428.8M1458.8 817.72H1483.0M1548.0 817.72H1570.8" stroke="#86d549" stroke-width="3.8" fill="none"/>
<path d="M165.0 801.34H189.2M258.0 801.34H488.0M508.0 801.34H615.0M625.8 801.34H718.0M728.8 801.34H826.2M949.2 801.34H1150.0M1160.0 801.34H1247.8M1258.0 801.34H1443.8M1458.8 801.34H1483.0M1553.0 801.34H1575.8" stroke="#52c569" stroke-width="3.8" fill="none"/>
<path d="M193.8 784.96H218.3M322.0 784.96H507.0M518.0 784.96H542.0M557.0 784.96H683.8M807.0 784.96H831.2M954.2 784.96H973.0M989.2 784.96H1125.0M1155.0 784.96H1217.8M1244.2 784.96H1266.7M1317.2 784.96H1340.8M1396.3 784.96H1418.8M1464.2 784.96H1650.0" stroke="#2ab07f" stroke-width="3.8" fill="none"/>
<path d="M340.8 768.58H370.0M410.0 768.58H448.0M468.8 768.58H493.0M528.0 768.58H546.2M562.0 768.58H591.2M615.8 768.58H648.8M959.2 768.58H988.0M1062.0 768.58H1085.8M1100.8 768.58H1125.0M1160.0 768.58H1193.8M1249.2 768.58H1272.0M1425.0 768.58H1512.0" stroke="#1e9b8a" stroke-width="3.8" fill="none"/>
<path d="M420.0 752.20H444.2M533.0 752.20H556.2M567.0 752.20H591.2M620.8 752.20H743.0M969.2 752.20H1135.0M1185.0 752.20H1345.8M1469.2 752.20H1493.0" stroke="#25858e" stroke-width="3.8" fill="none"/>
<path d="M430.0 735.82H453.0M577.0 735.82H733.0M994.2 735.82H1105.0M1115.8 735.82H1222.8M1263.0 735.82H1292.0M1489.2 735.82H1512.0" stroke="#2d708e" stroke-width="3.8" fill="none"/>
<path d="M592.0 719.44H615.0M655.0 719.44H772.0M1072.0 719.44H1242.8M1263.0 719.44H1287.0" stroke="#38588c" stroke-width="3.8" fill="none"/>
<path d="M595.8 703.06H733.0M1092.0 703.06H1120.0M1200.0 703.06H1223.0M1273.0 703.06H1325.8" stroke="#433e85" stroke-width="3.8" fill="none"/>
<path d="M1111.0 686.68H1135.0" stroke="#482173" stroke-width="3.8" fill="none"/>
<path d="M114.0 834.10h8M118.0 830.10v8M241.0 834.10h8M245.0 830.10v8M510.7 834.10h8M514.7 830.10v8M706.8 834.10h8M710.8 830.10v8M833.8 834.10h8M837.8 830.10v8M961.8 834.10h8M965.8 830.10v8M986.8 834.10h8M990.8 830.10v8M1116.8 834.10h8M1120.8 830.10v8M1296.0 834.10h8M1300.0 830.10v8M1341.8 834.10h8M1345.8 830.10v8M1412.7 834.10h8M1416.7 830.10v8M1481.8 834.10h8M1485.8 830.10v8M1530.7 834.10h8M1534.7 830.10v8M1732.0 834.10h8M1736.0 830.10v8M1765.6 834.10h8M1769.6 830.10v8M172.7 817.72h8M176.7 813.72v8M256.0 817.72h8M260.0 813.72v8M324.0 817.72h8M328.0 813.72v8M438.0 817.72h8M442.0 813.72v8M598.8 817.72h8M602.8 813.72v8M716.8 817.72h8M720.8 813.72v8M793.8 817.72h8M797.8 813.72v8M939.8 817.72h8M943.8 813.72v8M1006.0 817.72h8M1010.0 813.72v8M1152.7 817.72h8M1156.7 813.72v8M1251.0 817.72h8M1255.0 813.72v8M1299.7 817.72h8M1303.7 813.72v8M1349.7 817.72h8M1353.7 813.72v8M1402.7 817.72h8M1406.7 813.72v8M1466.8 817.72h8M1470.8 813.72v8M1554.8 817.72h8M1558.8 813.72v8M174.8 801.34h8M178.8 797.34v8M378.8 801.34h8M382.8 797.34v8M544.8 801.34h8M548.8 797.34v8M682.7 801.34h8M686.7 797.34v8M741.8 801.34h8M745.8 797.34v8M1074.8 801.34h8M1078.8 797.34v8M1216.8 801.34h8M1220.8 797.34v8M1304.8 801.34h8M1308.8 797.34v8M1466.8 801.34h8M1470.8 797.34v8M1559.7 801.34h8M1563.7 797.34v8M201.8 784.96h8M205.8 780.96v8M400.7 784.96h8M404.7 780.96v8M525.7 784.96h8M529.7 780.96v8M639.0 784.96h8M643.0 780.96v8M814.8 784.96h8M818.8 780.96v8M959.8 784.96h8M963.8 780.96v8M1040.7 784.96h8M1044.7 780.96v8M1187.7 784.96h8M1191.7 780.96v8M1251.0 784.96h8M1255.0 780.96v8M1324.8 784.96h8M1328.8 780.96v8M1402.7 784.96h8M1406.7 780.96v8M1545.7 784.96h8M1549.7 780.96v8M355.7 768.58h8M359.7 764.58v8M426.8 768.58h8M430.8 764.58v8M476.8 768.58h8M480.8 764.58v8M536.0 768.58h8M540.0 764.58v8M570.7 768.58h8M574.7 764.58v8M630.7 768.58h8M634.7 764.58v8M974.0 768.58h8M978.0 764.58v8M1069.3 768.58h8M1073.3 764.58v8M1109.0 768.58h8M1113.0 764.58v8M1177.7 768.58h8M1181.7 764.58v8M1255.7 768.58h8M1259.7 764.58v8M1466.8 768.58h8M1470.8 764.58v8M428.0 752.20h8M432.0 748.20v8M539.8 752.20h8M543.8 748.20v8M574.8 752.20h8M578.8 748.20v8M704.0 752.20h8M708.0 748.20v8M1094.8 752.20h8M1098.8 748.20v8M1271.0 752.20h8M1275.0 748.20v8M1476.8 752.20h8M1480.8 748.20v8M438.0 735.82h8M442.0 731.82v8M630.7 735.82h8M634.7 731.82v8M1038.5 735.82h8M1042.5 731.82v8M1167.7 735.82h8M1171.7 731.82v8M1274.7 735.82h8M1278.7 731.82v8M1496.8 735.82h8M1500.8 731.82v8M598.8 719.44h8M602.8 715.44v8M726.8 719.44h8M730.8 715.44v8M1187.7 719.44h8M1191.7 715.44v8M1270.7 719.44h8M1274.7 715.44v8M687.7 703.06h8M691.7 699.06v8M1101.8 703.06h8M1105.8 699.06v8M1206.8 703.06h8M1210.8 699.06v8M1299.7 703.06h8M1303.7 699.06v8M1118.7 686.68h8M1122.7 682.68v8" stroke="#ffffff" stroke-width="2" fill="none"/>
<text x="117.9" y="831.80" class="bl">KSE</text><text x="255.0" y="831.80" class="bl">ETA</text><text x="495.4" y="831.80" class="bl">NZC</text><text x="711.4" y="831.80" class="bl">NDA</text><text x="853.5" y="831.80" class="bl">SPE</text><text x="946.5" y="831.80" class="bl">ARD</text><text x="1025.0" y="831.80" class="bl">EGE</text><text x="1142.9" y="831.80" class="bl">NTA</text><text x="1285.0" y="831.80" class="bl">MON</text><text x="1346.4" y="831.80" class="bl">URS</text><text x="1412.3" y="831.80" class="bl">AHY</text><text x="1485.4" y="831.80" class="bl">GUM</text><text x="1535.0" y="831.80" class="bl">OHY</text><text x="1736.0" y="831.80" class="bl">XHE</text><text x="1769.9" y="831.80" class="bl">EVI</text><text x="177.1" y="815.42" class="bl">AVB</text><text x="255.6" y="815.42" class="bl">ELY</text><text x="326.5" y="815.42" class="bl">CAM</text><text x="429.4" y="815.42" class="bl">SSG</text><text x="581.1" y="815.42" class="bl">PCA</text><text x="721.1" y="815.42" class="bl">AUD</text><text x="809.6" y="815.42" class="bl">AUR</text><text x="929.6" y="815.42" class="bl">DSX</text><text x="1010.0" y="815.42" class="bl">OCU</text><text x="1137.5" y="815.42" class="bl">OER</text><text x="1255.5" y="815.42" class="bl">DKD</text><text x="1304.4" y="815.42" class="bl">DSV</text><text x="1353.5" y="815.42" class="bl">ALY</text><text x="1407.3" y="815.42" class="bl">JLE</text><text x="1470.9" y="815.42" class="bl">SCC</text><text x="1559.4" y="815.42" class="bl">FEV</text><text x="177.1" y="799.04" class="bl">LYR</text><text x="373.0" y="799.04" class="bl">JMC</text><text x="561.5" y="799.04" class="bl">JPE</text><text x="671.9" y="799.04" class="bl">PAU</text><text x="777.5" y="799.04" class="bl">NIA</text><text x="1049.6" y="799.04" class="bl">STA</text><text x="1203.9" y="799.04" class="bl">NOO</text><text x="1350.9" y="799.04" class="bl">COM</text><text x="1470.9" y="799.04" class="bl">NCC</text><text x="1564.4" y="799.04" class="bl">FED</text><text x="206.1" y="782.66" class="bl">HVI</text><text x="414.5" y="782.66" class="bl">ARI</text><text x="530.0" y="782.66" class="bl">SZC</text><text x="620.4" y="782.66" class="bl">CAP</text><text x="819.1" y="782.66" class="bl">NUE</text><text x="963.6" y="782.66" class="bl">OCT</text><text x="1057.1" y="782.66" class="bl">ORI</text><text x="1186.4" y="782.66" class="bl">AMO</text><text x="1255.5" y="782.66" class="bl">DPC</text><text x="1329.0" y="782.66" class="bl">XVI</text><text x="1407.5" y="782.66" class="bl">QUA</text><text x="1557.1" y="782.66" class="bl">AAN</text><text x="355.4" y="766.28" class="bl">TAH</text><text x="429.0" y="766.28" class="bl">JEA</text><text x="480.9" y="766.28" class="bl">JIP</text><text x="537.1" y="766.28" class="bl">PPS</text><text x="576.6" y="766.28" class="bl">ZCS</text><text x="632.3" y="766.28" class="bl">GDR</text><text x="973.6" y="766.28" class="bl">DRA</text><text x="1073.9" y="766.28" class="bl">LUM</text><text x="1112.9" y="766.28" class="bl">RPU</text><text x="1176.9" y="766.28" class="bl">THA</text><text x="1260.6" y="766.28" class="bl">PSU</text><text x="1468.5" y="766.28" class="bl">XCB</text><text x="432.1" y="749.90" class="bl">JRC</text><text x="544.6" y="749.90" class="bl">CAN</text><text x="579.1" y="749.90" class="bl">FAN</text><text x="681.9" y="749.90" class="bl">PER</text><text x="1052.1" y="749.90" class="bl">CTA</text><text x="1265.4" y="749.90" class="bl">HYD</text><text x="1481.1" y="749.90" class="bl">XUM</text><text x="441.5" y="733.52" class="bl">COR</text><text x="655.0" y="733.52" class="bl">SDA</text><text x="1049.6" y="733.52" class="bl">LMI</text><text x="1169.3" y="733.52" class="bl">LEO</text><text x="1277.5" y="733.52" class="bl">EHY</text><text x="1500.6" y="733.52" class="bl">ECV</text><text x="603.5" y="717.14" class="bl">JXA</text><text x="713.5" y="717.14" class="bl">KCG</text><text x="1157.4" y="717.14" class="bl">AND</text><text x="1275.0" y="717.14" class="bl">DAD</text><text x="664.4" y="700.76" class="bl">ERI</text><text x="1106.0" y="700.76" class="bl">SLD</text><text x="1211.5" y="700.76" class="bl">ORS</text><text x="1299.4" y="700.76" class="bl">GEM</text><text x="1123.0" y="684.38" class="bl">KUM</text>
<rect x="20.4" y="641.4" width="1765.1" height="200.9" fill="none" stroke="#ffffff" stroke-width="1.1"/>
<text x="16.6" y="862" class="tl" style="text-anchor:start" textLength="7.6" lengthAdjust="spacingAndGlyphs">0</text>
<text x="257.3" y="862" class="tl" style="text-anchor:start" textLength="16.5" lengthAdjust="spacingAndGlyphs">50</text>
<text x="498.0" y="862" class="tl" style="text-anchor:start" textLength="25.3" lengthAdjust="spacingAndGlyphs">100</text>
<text x="743.2" y="862" class="tl" style="text-anchor:start" textLength="25.3" lengthAdjust="spacingAndGlyphs">150</text>
<text x="988.4" y="862" class="tl" style="text-anchor:start" textLength="25.3" lengthAdjust="spacingAndGlyphs">200</text>
<text x="1233.5" y="862" class="tl" style="text-anchor:start" textLength="25.3" lengthAdjust="spacingAndGlyphs">250</text>
<text x="1478.7" y="862" class="tl" style="text-anchor:start" textLength="25.3" lengthAdjust="spacingAndGlyphs">300</text>
<text x="1723.8" y="862" class="tl" style="text-anchor:start" textLength="25.3" lengthAdjust="spacingAndGlyphs">350</text>
<path d="M20.4 842.3v4.8M265.6 842.3v4.8M510.7 842.3v4.8M755.9 842.3v4.8M1001.0 842.3v4.8M1246.2 842.3v4.8M1491.3 842.3v4.8M1736.5 842.3v4.8" stroke="#fff" stroke-width="1.1"/>
<text x="829.2" y="881.7" class="tl" style="text-anchor:start" textLength="146.5" lengthAdjust="spacingAndGlyphs">Solar longitude (deg)</text>
</svg></body></html>
